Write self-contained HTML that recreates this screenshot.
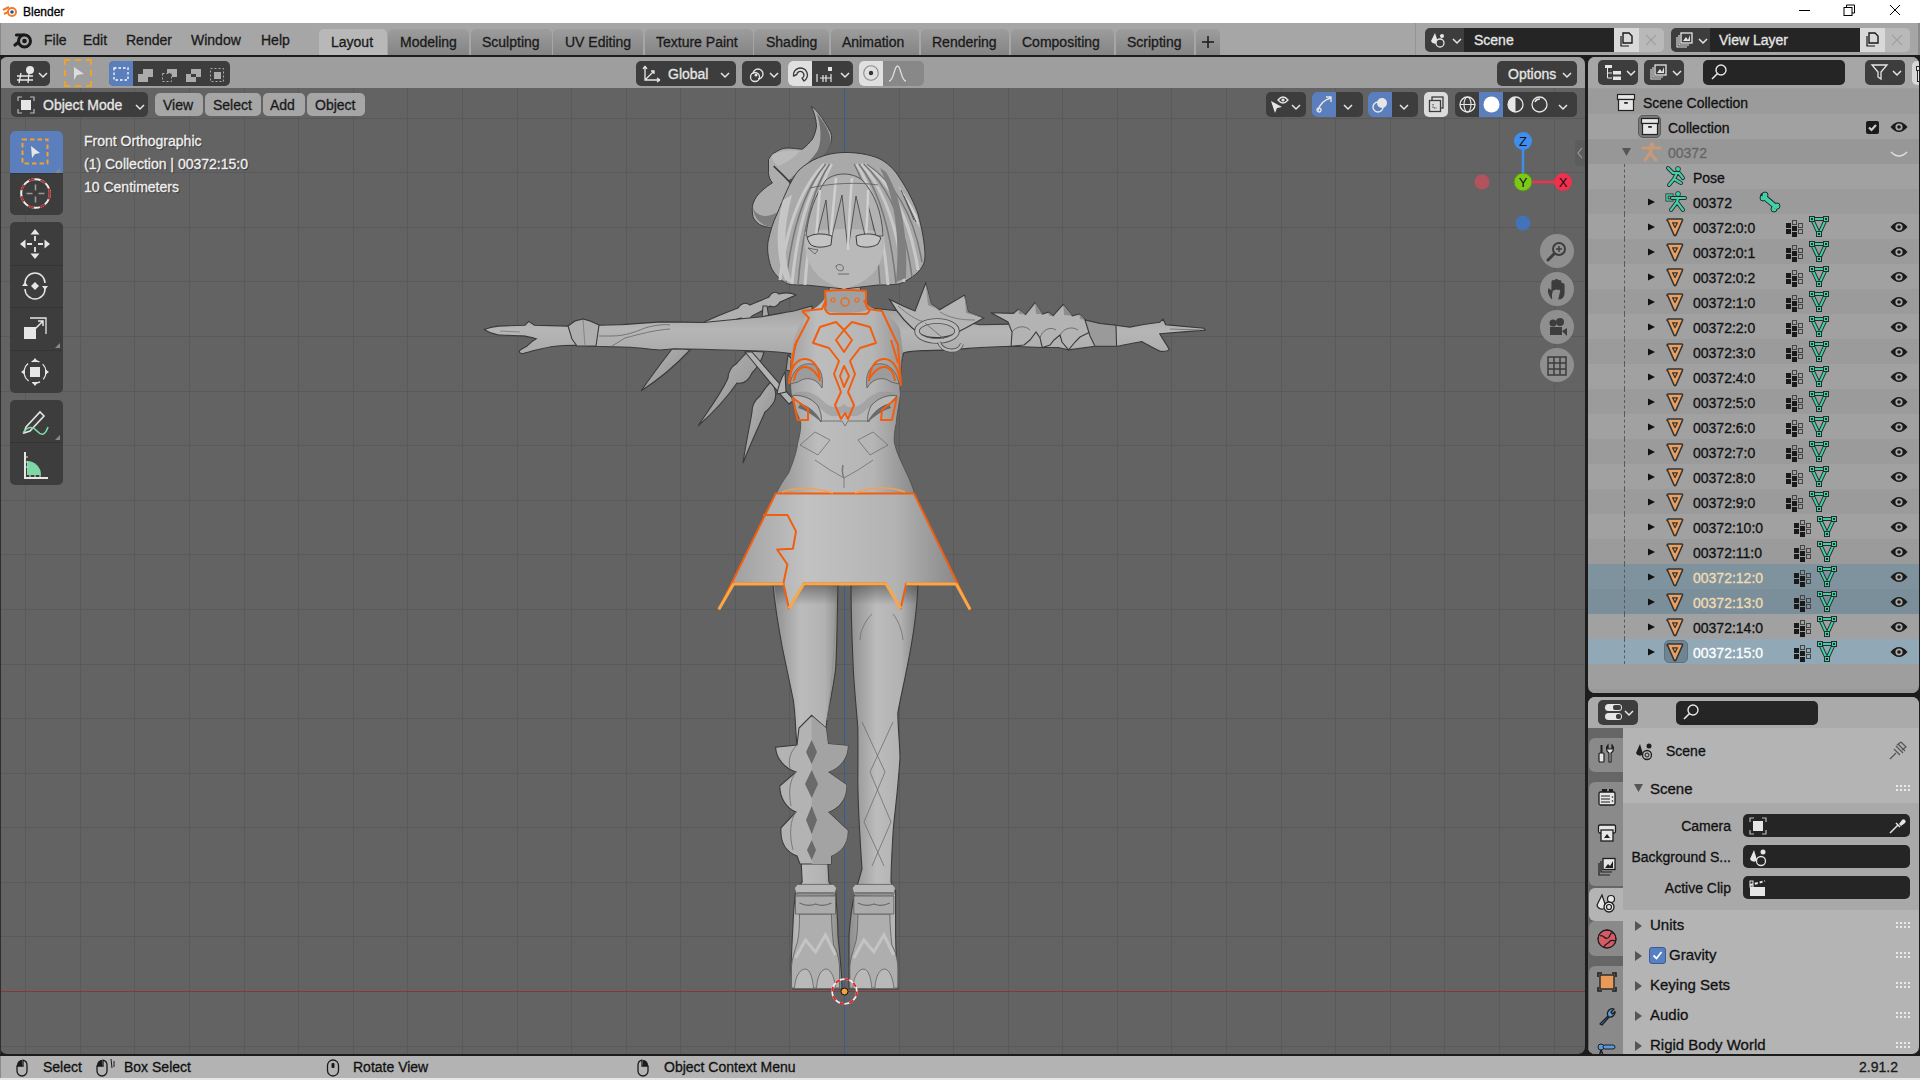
<!DOCTYPE html><html><head><meta charset="utf-8"><style>
*{margin:0;padding:0;box-sizing:border-box}
html,body{width:1920px;height:1080px;overflow:hidden;background:#1c1c1c;font-family:"Liberation Sans", sans-serif;-webkit-font-smoothing:antialiased;}
.a{position:absolute}
.t{position:absolute;white-space:nowrap;font-size:14px;line-height:16px;-webkit-text-stroke:0.3px currentColor}
svg{position:absolute;overflow:visible}
</style></head><body>
<div class="a" style="left:0px;top:0px;width:1920px;height:23px;background:#ffffff"></div><svg style="left:3px;top:4px" width="16" height="14" viewBox="0 0 16 14"><circle cx="9" cy="8" r="5" fill="#f5792a"/><circle cx="9" cy="8" r="3" fill="#fff"/><circle cx="9" cy="8" r="1.8" fill="#265787"/><path d="M0 6 L6 3 M1 10 L5 8" stroke="#f5792a" stroke-width="2"/></svg><div class="t" style="left:23px;top:4px;font-size:12px;color:#000">Blender</div><div class="a" style="left:1799px;top:10px;width:11px;height:1px;background:#000"></div><svg style="left:1843px;top:4px" width="13" height="13" viewBox="0 0 13 13"><rect x="1" y="3.5" width="8" height="8" fill="none" stroke="#000"/><path d="M3.5 3.5 V1 H11.5 V9 H9" fill="none" stroke="#000"/></svg><svg style="left:1889px;top:4px" width="13" height="13" viewBox="0 0 13 13"><path d="M1 1 L11 11 M11 1 L1 11" stroke="#000" stroke-width="1"/></svg><div class="a" style="left:0px;top:23px;width:1920px;height:32px;background:#a6a6a6"></div><div class="a" style="left:0px;top:23px;width:1px;height:32px;background:#8a8a8a"></div><div class="a" style="left:1918px;top:23px;width:2px;height:32px;background:#8a8a8a"></div><svg style="left:12px;top:30px" width="22" height="19" viewBox="0 0 22 19"><path d="M3 15 L10 9.5 M4.5 5 L12 5" stroke="#1a1a1a" stroke-width="3.2" stroke-linecap="round"/><circle cx="12.5" cy="11" r="6" fill="#a6a6a6" stroke="#1a1a1a" stroke-width="3"/><circle cx="12.5" cy="11" r="2.3" fill="#1a1a1a"/></svg><div class="t" style="left:44px;top:32px;color:#1a1a1a;font-size:14px">File</div><div class="t" style="left:83px;top:32px;color:#1a1a1a;font-size:14px">Edit</div><div class="t" style="left:126px;top:32px;color:#1a1a1a;font-size:14px">Render</div><div class="t" style="left:191px;top:32px;color:#1a1a1a;font-size:14px">Window</div><div class="t" style="left:261px;top:32px;color:#1a1a1a;font-size:14px">Help</div><div class="a" style="left:319px;top:29px;width:68px;height:26px;background:#b8b8b8;border-radius:5px 5px 0 0"></div><div class="t" style="left:331px;top:34px;color:#1a1a1a;font-size:14px">Layout</div><div class="a" style="left:388px;top:29px;width:81px;height:26px;background:linear-gradient(#9d9d9d,#848484);border-radius:5px 5px 0 0"></div><div class="t" style="left:400px;top:34px;color:#1a1a1a;font-size:14px">Modeling</div><div class="a" style="left:471px;top:29px;width:81px;height:26px;background:linear-gradient(#9d9d9d,#848484);border-radius:5px 5px 0 0"></div><div class="t" style="left:482px;top:34px;color:#1a1a1a;font-size:14px">Sculpting</div><div class="a" style="left:553px;top:29px;width:90px;height:26px;background:linear-gradient(#9d9d9d,#848484);border-radius:5px 5px 0 0"></div><div class="t" style="left:565px;top:34px;color:#1a1a1a;font-size:14px">UV Editing</div><div class="a" style="left:645px;top:29px;width:108px;height:26px;background:linear-gradient(#9d9d9d,#848484);border-radius:5px 5px 0 0"></div><div class="t" style="left:656px;top:34px;color:#1a1a1a;font-size:14px">Texture Paint</div><div class="a" style="left:754px;top:29px;width:75px;height:26px;background:linear-gradient(#9d9d9d,#848484);border-radius:5px 5px 0 0"></div><div class="t" style="left:766px;top:34px;color:#1a1a1a;font-size:14px">Shading</div><div class="a" style="left:831px;top:29px;width:88px;height:26px;background:linear-gradient(#9d9d9d,#848484);border-radius:5px 5px 0 0"></div><div class="t" style="left:842px;top:34px;color:#1a1a1a;font-size:14px">Animation</div><div class="a" style="left:921px;top:29px;width:88px;height:26px;background:linear-gradient(#9d9d9d,#848484);border-radius:5px 5px 0 0"></div><div class="t" style="left:932px;top:34px;color:#1a1a1a;font-size:14px">Rendering</div><div class="a" style="left:1011px;top:29px;width:103px;height:26px;background:linear-gradient(#9d9d9d,#848484);border-radius:5px 5px 0 0"></div><div class="t" style="left:1022px;top:34px;color:#1a1a1a;font-size:14px">Compositing</div><div class="a" style="left:1116px;top:29px;width:78px;height:26px;background:linear-gradient(#9d9d9d,#848484);border-radius:5px 5px 0 0"></div><div class="t" style="left:1127px;top:34px;color:#1a1a1a;font-size:14px">Scripting</div><div class="a" style="left:1196px;top:29px;width:24px;height:26px;background:linear-gradient(#9d9d9d,#848484);border-radius:5px 5px 0 0"></div><svg style="left:1202px;top:36px" width="12" height="12" viewBox="0 0 12 12"><path d="M6 0 V12 M0 6 H12" stroke="#1a1a1a" stroke-width="1.5"/></svg><div class="a" style="left:1415px;top:23px;width:1px;height:32px;background:#959595"></div><div class="a" style="left:1425px;top:28px;width:39px;height:24px;background:#3d3d3d;border-radius:5px 0 0 5px"></div><svg style="left:1430px;top:31px" width="18" height="18" viewBox="0 0 18 18"><path d="M5 2 L1 10 A4 4 0 0 0 8 11 Z" fill="#e6e6e6"/><circle cx="12" cy="5" r="2" fill="#e6e6e6"/><circle cx="10" cy="12" r="4" fill="#3d3d3d" stroke="#e6e6e6" stroke-width="1.3"/></svg><svg style="left:1452px;top:38px" width="10" height="6" viewBox="0 0 10 6"><path d="M1 1 L5 5 L9 1" stroke="#e6e6e6" stroke-width="1.5" fill="none"/></svg><div class="a" style="left:1464px;top:28px;width:150px;height:24px;background:#252525"></div><div class="t" style="left:1474px;top:32px;color:#e6e6e6;font-size:14px">Scene</div><div class="a" style="left:1614px;top:28px;width:25px;height:24px;background:#d9d9d9"></div><svg style="left:1618px;top:32px" width="16" height="16" viewBox="0 0 16 16"><path d="M5 1 H11 L14 4 V11 H5 Z" fill="none" stroke="#1a1a1a" stroke-width="1.4"/><path d="M3 4 V14 H11" fill="none" stroke="#1a1a1a" stroke-width="1.2"/></svg><div class="a" style="left:1639px;top:28px;width:25px;height:24px;background:#b9b9b9;border-radius:0 5px 5px 0"></div><svg style="left:1645px;top:34px" width="12" height="12" viewBox="0 0 12 12"><path d="M1 1 L11 11 M11 1 L1 11" stroke="#a0a0a0" stroke-width="1.2"/></svg><div class="a" style="left:1671px;top:28px;width:39px;height:24px;background:#3d3d3d;border-radius:5px 0 0 5px"></div><svg style="left:1676px;top:31px" width="18" height="18" viewBox="0 0 18 18"><rect x="5" y="2" width="11" height="10" fill="none" stroke="#e6e6e6" stroke-width="1.3"/><path d="M3 4 V14 H13 M1 6 V16 H11" fill="none" stroke="#e6e6e6" stroke-width="1.1"/><path d="M7 10 L10 6 L12 9 L14 4 V10 Z" fill="#e6e6e6"/></svg><svg style="left:1698px;top:38px" width="10" height="6" viewBox="0 0 10 6"><path d="M1 1 L5 5 L9 1" stroke="#e6e6e6" stroke-width="1.5" fill="none"/></svg><div class="a" style="left:1710px;top:28px;width:150px;height:24px;background:#252525"></div><div class="t" style="left:1719px;top:32px;color:#e6e6e6;font-size:14px">View Layer</div><div class="a" style="left:1860px;top:28px;width:25px;height:24px;background:#d9d9d9"></div><svg style="left:1864px;top:32px" width="16" height="16" viewBox="0 0 16 16"><path d="M5 1 H11 L14 4 V11 H5 Z" fill="none" stroke="#1a1a1a" stroke-width="1.4"/><path d="M3 4 V14 H11" fill="none" stroke="#1a1a1a" stroke-width="1.2"/></svg><div class="a" style="left:1885px;top:28px;width:25px;height:24px;background:#b9b9b9;border-radius:0 5px 5px 0"></div><svg style="left:1891px;top:34px" width="12" height="12" viewBox="0 0 12 12"><path d="M1 1 L11 11 M11 1 L1 11" stroke="#a0a0a0" stroke-width="1.2"/></svg><div class="a" style="left:0;top:57px;width:1585px;height:997px;background:#636363;border-radius:7px;overflow:hidden"><svg style="left:0px;top:0px" width="1585" height="997" viewBox="0 0 1585 997"><rect x="25" y="0" width="1" height="1000" fill="#5a5a5a"/><rect x="80" y="0" width="1" height="1000" fill="#5a5a5a"/><rect x="134" y="0" width="1" height="1000" fill="#5a5a5a"/><rect x="189" y="0" width="1" height="1000" fill="#5a5a5a"/><rect x="244" y="0" width="1" height="1000" fill="#5a5a5a"/><rect x="298" y="0" width="1" height="1000" fill="#5a5a5a"/><rect x="353" y="0" width="1" height="1000" fill="#5a5a5a"/><rect x="407" y="0" width="1" height="1000" fill="#5a5a5a"/><rect x="462" y="0" width="1" height="1000" fill="#5a5a5a"/><rect x="517" y="0" width="1" height="1000" fill="#5a5a5a"/><rect x="571" y="0" width="1" height="1000" fill="#5a5a5a"/><rect x="626" y="0" width="1" height="1000" fill="#5a5a5a"/><rect x="680" y="0" width="1" height="1000" fill="#5a5a5a"/><rect x="735" y="0" width="1" height="1000" fill="#5a5a5a"/><rect x="789" y="0" width="1" height="1000" fill="#5a5a5a"/><rect x="899" y="0" width="1" height="1000" fill="#5a5a5a"/><rect x="953" y="0" width="1" height="1000" fill="#5a5a5a"/><rect x="1008" y="0" width="1" height="1000" fill="#5a5a5a"/><rect x="1062" y="0" width="1" height="1000" fill="#5a5a5a"/><rect x="1117" y="0" width="1" height="1000" fill="#5a5a5a"/><rect x="1171" y="0" width="1" height="1000" fill="#5a5a5a"/><rect x="1226" y="0" width="1" height="1000" fill="#5a5a5a"/><rect x="1281" y="0" width="1" height="1000" fill="#5a5a5a"/><rect x="1335" y="0" width="1" height="1000" fill="#5a5a5a"/><rect x="1390" y="0" width="1" height="1000" fill="#5a5a5a"/><rect x="1444" y="0" width="1" height="1000" fill="#5a5a5a"/><rect x="1499" y="0" width="1" height="1000" fill="#5a5a5a"/><rect x="1554" y="0" width="1" height="1000" fill="#5a5a5a"/><rect x="0" y="6" width="1600" height="1" fill="#5a5a5a"/><rect x="0" y="61" width="1600" height="1" fill="#5a5a5a"/><rect x="0" y="115" width="1600" height="1" fill="#5a5a5a"/><rect x="0" y="170" width="1600" height="1" fill="#5a5a5a"/><rect x="0" y="224" width="1600" height="1" fill="#5a5a5a"/><rect x="0" y="279" width="1600" height="1" fill="#5a5a5a"/><rect x="0" y="334" width="1600" height="1" fill="#5a5a5a"/><rect x="0" y="388" width="1600" height="1" fill="#5a5a5a"/><rect x="0" y="443" width="1600" height="1" fill="#5a5a5a"/><rect x="0" y="497" width="1600" height="1" fill="#5a5a5a"/><rect x="0" y="552" width="1600" height="1" fill="#5a5a5a"/><rect x="0" y="607" width="1600" height="1" fill="#5a5a5a"/><rect x="0" y="661" width="1600" height="1" fill="#5a5a5a"/><rect x="0" y="716" width="1600" height="1" fill="#5a5a5a"/><rect x="0" y="770" width="1600" height="1" fill="#5a5a5a"/><rect x="0" y="825" width="1600" height="1" fill="#5a5a5a"/><rect x="0" y="879" width="1600" height="1" fill="#5a5a5a"/><rect x="0" y="989" width="1600" height="1" fill="#5a5a5a"/></svg><div class="a" style="left:0px;top:934px;width:1585px;height:1px;background:#8a3636"></div><div class="a" style="left:844px;top:0px;width:1px;height:997px;background:#3a5b96"></div><svg style="left:0;top:0" width="1585" height="997" viewBox="0 57 1585 997"><defs>
<linearGradient id="armG" x1="0" y1="0" x2="0" y2="1">
 <stop offset="0" stop-color="#a0a0a0"/><stop offset="0.35" stop-color="#b6b6b6"/><stop offset="0.7" stop-color="#ababab"/><stop offset="1" stop-color="#7e7e7e"/></linearGradient>
<linearGradient id="legG" x1="0" y1="0" x2="1" y2="0">
 <stop offset="0" stop-color="#8e8e8e"/><stop offset="0.4" stop-color="#bcbcbc"/><stop offset="0.75" stop-color="#b2b2b2"/><stop offset="1" stop-color="#858585"/></linearGradient>
<linearGradient id="torsoG" x1="0" y1="0" x2="1" y2="0">
 <stop offset="0" stop-color="#949494"/><stop offset="0.3" stop-color="#bdbdbd"/><stop offset="0.7" stop-color="#b5b5b5"/><stop offset="1" stop-color="#8a8a8a"/></linearGradient>
<linearGradient id="skirtG" x1="0" y1="0" x2="1" y2="0">
 <stop offset="0" stop-color="#9a9a9a"/><stop offset="0.35" stop-color="#c2c2c2"/><stop offset="0.7" stop-color="#b3b3b3"/><stop offset="1" stop-color="#808080"/></linearGradient>
<linearGradient id="hairG" x1="0" y1="0" x2="1" y2="0">
 <stop offset="0" stop-color="#9c9c9c"/><stop offset="0.4" stop-color="#bababa"/><stop offset="0.8" stop-color="#a8a8a8"/><stop offset="1" stop-color="#888888"/></linearGradient>
<linearGradient id="spikeG" x1="0" y1="0" x2="1" y2="1">
 <stop offset="0" stop-color="#b8b8b8"/><stop offset="1" stop-color="#8a8a8a"/></linearGradient>
</defs><path d="M700,324 C712,318 725,313 738,308 C741,303 746,302 750,305 C757,302 764,299 769,297 C771,292 776,291 779,294 C786,292 792,293 796,295 C790,298 784,300 780,302 C778,306 774,308 770,306 C764,310 758,313 752,316 C749,320 744,321 741,318 C728,322 716,325 705,327 Z" fill="#b0b0b0" stroke="#3a3a3a" stroke-width="1.1"/><path d="M763,306 L767,306 L769,318 L762,318 Z" fill="#a8a8a8" stroke="#3a3a3a" stroke-width="1.1"/><path d="M672,349 C680,348.5 686,349 690,350 C675,366 658,380 641,391 C650,378 662,362 672,349 Z" fill="url(#spikeG)" stroke="#3a3a3a" stroke-width="1.1"/><path d="M748,351 L764,352 C762,360 757,368 752,373 C748,382 742,384 737,383 C728,396 714,412 698,426 C710,408 722,392 728,378 C728,372 732,366 736,364 C740,360 744,355 748,351 Z" fill="url(#spikeG)" stroke="#3a3a3a" stroke-width="1.1"/><path d="M771,382 C776,388 777,396 774,402 C770,408 768,410 765,412 C758,428 750,445 743,463 C746,442 750,425 752,412 C752,405 755,400 760,396 C764,390 767,385 771,382 Z" fill="url(#spikeG)" stroke="#3a3a3a" stroke-width="1.1"/><path d="M745,352 L752,352 C766,368 780,385 794,400 L789,404 C776,390 760,370 745,352 Z" fill="#b3b3b3" stroke="#3a3a3a" stroke-width="1.1"/><path d="M785,372 C780,380 778,388 777,394 L786,392 Z" fill="#b3b3b3" stroke="#3a3a3a" stroke-width="1.1"/><path d="M788,355 C794,360 796,366 794,372 L786,370 Z" fill="#a0a0a0" stroke="#3a3a3a" stroke-width="1.1"/><path d="M870,308 C880,309 890,310 900,311 C930,316 960,321 980,324.7 L1010,324.1 L1099.8,323.5 L1115.4,325.3 L1129.7,327.1 C1140,325 1150,323.5 1159.7,322.3 L1163,319 L1165.7,324.7 C1180,326 1195,327.5 1204,328.3 L1205.2,330.1 C1190,331.5 1170,333 1159.7,333.7 C1163,340 1168,346 1169.3,349.9 C1166,352 1162,351.5 1159.7,351.1 C1152,347 1146,344 1141.7,341.5 C1133,343 1125,345 1116.6,346.3 L1095,346.3 L1068.6,349.9 L1057.9,347.5 L1042.3,347.5 L1011.1,346.3 L980,347.5 C960,349 940,351 923,350.6 C912,351 905,352 903.6,353 L898,376 L870,376 Z" fill="url(#armG)" stroke="#3a3a3a" stroke-width="1.1"/><path d="M990.8,312.8 L1013.5,313.4 L1018.3,309.2 L1025.5,314.6 L1035.1,302.6 L1042.3,314 L1048.3,312.2 L1053,315.8 L1063.3,304.4 L1072.2,315.8 L1079.4,314 L1085.4,320 L1099.8,323.5 L1097,330 L1088,333 L1080,337 L1075,342 L1068.6,349.9 L1062,342 L1060,335 L1054,340 L1050,345 L1042.3,347.5 L1040,338 L1036,332 L1030,340 L1024,345 L1011.1,346.3 L1012,332 L1008,322 Z" fill="#b3b3b3" stroke="#3a3a3a" stroke-width="1.1"/><path d="M1035.1,302.6 L1042.3,314 L1036,314 Z M1063.3,304.4 L1072.2,315.8 L1064,315 Z M1018.3,309.2 L1025.5,314.6 L1019,314 Z M1048.3,312.2 L1053,315.8 L1049,315.5 Z M1079.4,314 L1085.4,320 L1080,319 Z" fill="#8c8c8c"/><path d="M1012,332 C1016,326 1025,325 1030,330 M1040,338 C1042,330 1050,326 1056,330 M1060,335 C1064,328 1072,326 1078,330" stroke="#5e5e5e" stroke-width="0.8" fill="none"/><path d="M1085,320 L1099.8,323.5 L1116,325.3 L1116.6,346.3 L1095,346.3 L1090,336 Z" fill="#9a9a9a" stroke="#3a3a3a" stroke-width="1.1"/><path d="M1170,329 L1200,330" stroke="#777" stroke-width="1" fill="none"/><path d="M889.6,299.6 C897,303 906,308 915,311 L925.7,283 L931,304 L939.6,309.8 L964.6,295 L968,312 L984,318 C976,322 968,327 958,332 C948,338 932,340 920,334 C908,326 898,314 889.6,299.6 Z" fill="#b4b4b4" stroke="#3a3a3a" stroke-width="1.1"/><path d="M925.7,283 L928,305 L939.6,309.8 L931,304 Z M964.6,295 L966,313 L984,318 L968,312 Z" fill="#8e8e8e"/><path d="M898,306 C908,314 915,320 925,322 M940,312 C950,318 960,320 975,320" stroke="#6e6e6e" stroke-width="0.8" fill="none"/><ellipse cx="937" cy="331" rx="20" ry="10" fill="none" stroke="#4e4e4e" stroke-width="5.5"/><ellipse cx="937" cy="331" rx="20" ry="10" fill="none" stroke="#b9b9b9" stroke-width="3.8"/><path d="M925,323 L944,339" stroke="#666" stroke-width="0.8"/><path d="M939,342 C942,352 958,354 962,344" fill="none" stroke="#4e4e4e" stroke-width="4"/><path d="M939,342 C942,352 958,354 962,344" fill="none" stroke="#b5b5b5" stroke-width="2.4"/><path d="M898,352 C902,358 903,366 901,376 L896,376 Z" fill="#555"/><path d="M484.2,329.4 C490,327 495,326.5 498.7,326.1 C510,325.5 520,325.3 525,325.2 L528.7,321.4 L534.4,325.2 C540,325.4 545,325.5 550.3,325.6 L568.1,326.1 L575,321 L583.1,319.1 L590,321 L599,325.2 C610,325 615,324.8 620.6,324.7 C640,323.5 650,322.5 660,321.9 C680,322 695,322.3 703.6,322.5 C730,320 750,318 761.9,316.7 C775,314.5 785,312.5 794.9,310.8 L812,306 L815,372 C805,362 797,355 791,353.6 C780,352 765,351 752.2,350.7 C720,350 700,349 674.4,348.7 L660,350 C650,349 640,348 630,347.2 C615,346.8 600,346.4 592.5,346.2 C585,345.8 580,345.5 573.7,345.3 C565,345.5 560,345.8 555,346.2 C548,347 542,348.5 536.2,350 C530,351.5 526,353 522.2,353.7 C520,353.5 519,352 519.4,350.9 C521,349 524,347.5 526.9,346.2 C530,343 533,340.5 536.2,338.8 C530,337 526,336.2 522.2,335.9 C515,335.5 505,335.2 498.7,335 C492,333.5 488,332 485.6,330.3 Z" fill="url(#armG)" stroke="#3a3a3a" stroke-width="1.1"/><path d="M568,326 L575,321 L583,319 L590,321 L599,325 L596,346 L577,346 L572,339 Z" fill="#aeaeae" stroke="#3a3a3a" stroke-width="1.1"/><path d="M583,320 L585,346 M500,331 L520,332" stroke="#7a7a7a" stroke-width="0.8" fill="none"/><path d="M599,336 L612,336 C625,336 635,332 645,328 C655,325 665,324 670,325 M612,346 L625,338 C640,334 655,330 670,329" fill="none" stroke="#6e6e6e" stroke-width="0.9"/><path d="M828,290 L861,290 C863,300 866,305 872,308 C885,312 895,318 900,330 L903,353 C900,370 899,385 900.5,394 C898,410 896,420 896.4,422.5 C894,432 894,440 894.4,443 C897,455 903,465 906.6,473.4 C910,480 913,488 914.8,494 L776,494 C780,485 785,478 788.5,473.4 C794,460 797,450 797.7,443 C800,435 801,428 800.7,422.5 C797,412 793,405 792.6,402 C790,390 790,375 791,360 C792,340 800,318 812,310 C820,305 826,300 828,290 Z" fill="url(#torsoG)"/><path d="M791,360 C790,375 790,390 792.6,402 C793,405 797,412 800.7,422.5 C801,428 800,435 797.7,443 C797,450 794,460 788.5,473.4 C785,478 780,485 776,494 M903,353 C900,370 899,385 900.5,394 C898,410 896,420 896.4,422.5 C894,432 894,440 894.4,443 C897,455 903,465 906.6,473.4 C910,480 913,488 914.8,494" fill="none" stroke="#4e4e4e" stroke-width="0.8"/><path d="M800,445 L815,432 L830,440 L818,455 Z M888,445 L873,432 L858,440 L870,455 Z M815,460 L830,470 L844,478 L858,470 L873,460 M844,478 L844,488" fill="none" stroke="#6e6e6e" stroke-width="0.8"/><path d="M843,465 C842,470 842,474 844,478" stroke="#7a7a7a" stroke-width="1.5" fill="none"/><path d="M773,585 L838,585 C837,620 837,650 835.6,669 C833,690 828,710 826.7,722 C825,735 824,745 824.4,758 C825,800 827,850 828.9,882 L835.6,891 C837,910 838,930 838,936 C840,955 842,975 842,989 L793,989 C791,975 791,970 791,967 C792,940 793,925 793.3,918 C794,905 795,897 795.6,891 L802.2,882 C800,840 798,790 797.8,758 C797,745 796,735 795.6,727 C795,715 794,705 793.3,700 C789,680 785,660 782.2,647 C778,625 775,605 773,585 Z" fill="url(#legG)" stroke="#3a3a3a" stroke-width="1.1"/><path d="M851,585 L918,585 C917,610 914,630 911,647 C906,675 900,700 897.8,713 C898,730 900,745 900,758 C898,790 895,810 893.3,829 C892,850 891,870 891,882 L895.6,891 C895.6,910 895.6,925 895.6,936 C896,955 897,975 897.8,989 L849,989 C849,975 849,955 849,936 C850,920 853,900 855.6,891 L862,869 C860,840 858,810 857.8,780 C858,760 858,740 857.8,727 C856,705 854,685 853.3,669 C852,640 851,610 851,585 Z" fill="url(#legG)" stroke="#3a3a3a" stroke-width="1.1"/><path d="M836,600 C835,640 833,680 827,720" stroke="#8a8a8a" stroke-width="1.2" fill="none" opacity="0.6"/><defs><linearGradient id="shadG" x1="0" y1="0" x2="0" y2="1"><stop offset="0" stop-color="#3a3a3a" stop-opacity="0.55"/><stop offset="1" stop-color="#3a3a3a" stop-opacity="0"/></linearGradient></defs><path d="M774,583 L838,583 L837,605 L777,605 Z M851,583 L918,583 L916,605 L851,605 Z" fill="url(#shadG)"/><path d="M811.7,715.3 L826,728 L828,744 L847.8,745.8 C848,758 840,768 828,772 L846.4,784.7 C847,798 840,808 828,812 L847.8,830.6 C848,845 840,852 831,856 L831,864 L800,864 L797,856 C786,852 780,842 781,827.8 L796,812 C786,808 780,798 779.7,786 L796,772 C784,768 776,758 775.6,747.2 L797,745 L799,728 Z" fill="#b3b3b3" stroke="#3a3a3a" stroke-width="1.1"/><path d="M811.7,716 L826,728 L828,744 L847.8,745.8 C848,758 840,768 828,772 L846.4,784.7 C847,798 840,808 828,812 L847.8,830.6 C848,845 840,852 831,856 L831,864 L811.7,864 Z" fill="#a3a3a3"/><path d="M811.7,740 L806,752 L811.7,764 L817,752 Z M811.7,770 L805,784 L811.7,798 L818,784 Z M811.7,806 L806,820 L811.7,834 L817,820 Z M811.7,840 L807,850 L811.7,860 L816,850 Z" fill="#6a6a6a"/><path d="M797,745 C790,752 788,760 790,768 M796,772 C790,780 788,790 791,806 M796,812 C790,820 789,835 793,850" stroke="#7a7a7a" stroke-width="1" fill="none"/><path d="M862,722 L885,772 L864,822 L884,866 M893,722 L870,772 L891,822 L872,866 M860,640 C860,630 866,620 872,614 M903,640 C902,630 898,620 893,614" fill="none" stroke="#6e6e6e" stroke-width="0.8"/><path d="M799.5,914 C799.5,930 798.5,940 796.5,945 C793.5,955 791.5,962 791.5,968 L791.5,988 L839.5,988 L839.5,968 C839.5,960 836.5,950 833.5,945 C832.5,935 831.5,925 831.5,914 Z" fill="#aeaeae" stroke="#5a5a5a" stroke-width="0.8"/><path d="M795.5,896 L835.5,896 L835.5,914 L795.5,914 Z" fill="#ababab" stroke="#5a5a5a" stroke-width="0.8"/><path d="M799.5,903 C805.5,906 810.5,906 815.5,904 C820.5,906 825.5,906 831.5,903" stroke="#6a6a6a" stroke-width="1.2" fill="none"/><path d="M794.4,888 L797.4,884.4 L833.6,884.4 L836.6,888 L834.6,895 L796.4,895 Z" fill="#b8b8b8" stroke="#5a5a5a" stroke-width="0.8"/><path d="M796.4,893 L834.6,893" stroke="#7a7a7a" stroke-width="2.2"/><path d="M795.5,958 L805.5,940 L815.5,952 L825.5,935 L835.5,955" fill="none" stroke="#c4c4c4" stroke-width="3"/><path d="M794.5,988 C795.5,975 800.5,969 805.5,969 C810.5,970 812.5,978 813.5,988 M816.5,988 C817.5,975 821.5,969 826.5,969 C831.5,970 834.5,978 835.5,988" fill="#b9b9b9" stroke="#6a6a6a" stroke-width="0.9"/><path d="M857.85,914 C857.85,930 856.85,940 854.85,945 C851.85,955 849.85,962 849.85,968 L849.85,988 L897.85,988 L897.85,968 C897.85,960 894.85,950 891.85,945 C890.85,935 889.85,925 889.85,914 Z" fill="#aeaeae" stroke="#5a5a5a" stroke-width="0.8"/><path d="M853.85,896 L893.85,896 L893.85,914 L853.85,914 Z" fill="#ababab" stroke="#5a5a5a" stroke-width="0.8"/><path d="M857.85,903 C863.85,906 868.85,906 873.85,904 C878.85,906 883.85,906 889.85,903" stroke="#6a6a6a" stroke-width="1.2" fill="none"/><path d="M852.2,888 L855.2,884.4 L892.5,884.4 L895.5,888 L893.5,895 L854.2,895 Z" fill="#b8b8b8" stroke="#5a5a5a" stroke-width="0.8"/><path d="M854.2,893 L893.5,893" stroke="#7a7a7a" stroke-width="2.2"/><path d="M853.85,958 L863.85,940 L873.85,952 L883.85,935 L893.85,955" fill="none" stroke="#c4c4c4" stroke-width="3"/><path d="M852.85,988 C853.85,975 858.85,969 863.85,969 C868.85,970 870.85,978 871.85,988 M874.85,988 C875.85,975 879.85,969 884.85,969 C889.85,970 892.85,978 893.85,988" fill="#b9b9b9" stroke="#6a6a6a" stroke-width="0.9"/><path d="M775.6,493.6 L914.1,493.6 L970,609.3 L955.8,583.4 L906.2,583.4 L900.7,608.5 L885.8,583.4 L803.9,583.4 L789,608.5 L783.4,583.4 L733.8,583.4 L718.9,609.3 Z" fill="url(#skirtG)"/><path d="M775.6,493.6 L914.1,493.6 L970,609.3 L955.8,583.4 L906.2,583.4 L900.7,608.5 L885.8,583.4 L803.9,583.4 L789,608.5 L783.4,583.4 L733.8,583.4 L718.9,609.3 Z" fill="none" stroke="#f15e10" stroke-width="2" stroke-linejoin="round"/><path d="M763,514.9 L787.4,514.9 L796,531.4 L792.9,548.7 L777.1,549.5 L787.4,564.5 L783.4,583.4" fill="none" stroke="#f15e10" stroke-width="2" stroke-linejoin="round"/><path d="M733.8,583.4 L718.9,609.3 M955.8,583.4 L970,609.3 M789,608.5 L803.9,583.4 M885.8,583.4 L900.7,608.5 M733.8,584 L783.4,584 M803.9,584 L885.8,584 M906.2,584 L955.8,584" stroke="#f8a848" stroke-width="3" fill="none"/><path d="M782,492 C795,487 810,486 833,493 M855,493 C870,487 890,486 905,492" stroke="#f5a050" stroke-width="1.5" fill="none"/><path d="M830,280 L860,280 L861,300 L828,300 Z" fill="#a8a8a8" stroke="#3a3a3a" stroke-width="1.1"/><path d="M811.3,106.5 C818,110 826,124 830.7,132.4 C832,137 832,140 830.7,142.8 C829,148 826,152 824.2,154.4 C820,160 816,164 812.6,167.4 C806,172 802,174 798.3,176.5 L789.2,180.3 C790,184 791.5,187 791.8,190.7 C792,195 792,198 791.8,201.1 C790,207 786,212 782.8,216.6 C779,221 776,224 772.4,227 C768,228 762,226 759.4,224.4 C756,222 754,219 753,216.6 C752,212 752,207 753,203.7 C755,198 758,194 762,190.7 C766,187 769,185 772.4,182.9 C770,180 768.5,176 768.5,172.6 L768.5,159.6 C770,156 773,153 776.3,151.8 C780,149 784,148 788,148 C793,148 798,149 802.2,149.2 C807,146 810,142 812.6,138.9 C815,134 816,130 816.5,125.9 C816,118 814,112 811.3,106.5 Z" fill="#adadad" stroke="#3a3a3a" stroke-width="1"/><path d="M816.5,113 C824,122 831,132 830.7,142.8 C829,150 824,156 816,164 C804,172 796,176 790,179 C800,170 812,160 818,150 C822,140 821,125 816.5,113 Z" fill="#6f6f6f"/><path d="M773.7,166.1 C780,172 786,178 790.5,182.9" stroke="#3a3a3a" stroke-width="1.6" fill="none"/><path d="M753,208 C754,220 764,228 774,226 C784,220 790,210 791.5,196 C786,208 776,216 764,216 C758,215 755,212 753,208 Z" fill="#7e7e7e"/><path d="M772,155 C780,150 792,150 800,151 C794,158 786,163 778,166 C774,163 771,159 772,155 Z" fill="#bbbbbb"/><path d="M843,152.5 C860,152 875,156 882,160 C890,165 896,172 899,177 C908,190 915,205 918,214 C922,228 925,245 925,256 C925,262 923,266 920,270 C915,276 905,282 899,284 C890,285 880,285 878,285 L844,289 L806,285 C800,285 792,285 788,284 C780,280 774,274 771,267 C768,258 767,250 768,242 C770,232 773,222 777,214 C783,200 790,180 799,170 C810,160 825,153 843,152.5 Z" fill="#a9a9a9" stroke="#3a3a3a" stroke-width="1"/><path d="M824.1,164 Q789.5,199.4 780,280 M827.7,164 Q799.6,200.8 792,284 M831.6,164 Q810.7,201.2 805,285 M856.5,164 Q881.2,201.2 888,285 M861.3,164 Q894.9,200.1 904,282 M865.5,164 Q906.8,195.9 918,270" fill="none" stroke="#c9c9c9" stroke-width="3"/><path d="M825.9,164 Q794.5,200.4 786,283 M829.5,164 Q804.8,201.2 798,285 M854.1,164 Q874.5,201.2 880,285 M858.9,164 Q888.0,200.8 896,284 M863.7,164 Q901.6,198.3 912,277 M866.7,164 Q910.1,193.1 922,262" fill="none" stroke="#777" stroke-width="1.5"/><path d="M886,172 C900,195 908,230 906,278 L896,282 C900,240 896,200 880,168 Z" fill="#7f7f7f"/><path d="M898,185 C905,195 912,205 917,216 L920,228 C912,215 905,200 898,185 Z" fill="#d0d0d0"/><path d="M783,200 C776,225 775,255 785,280 L792,283 C782,255 784,225 792,195 Z" fill="#c6c6c6"/><path d="M901,190 L914,220 M904,196 L916,222" stroke="#555" stroke-width="1" fill="none"/><path d="M805,232 C830,228 860,228 884,232 C886,262 876,280 844,289 C814,281 803,262 805,232 Z" fill="#b9b9b9"/><path d="M806,236 C808,215 815,195 826,180 C836,172 852,172 862,180 C874,192 882,212 883,236 L876,236 L868,205 L866,240 L856,196 L848,250 L842,195 L830,244 L826,200 L816,240 Z" fill="#b2b2b2" stroke="#4a4a4a" stroke-width="0.9" stroke-linejoin="round"/><path d="M820,190 C818,205 818,220 816,236 M836,178 C834,200 832,220 830,244 M852,178 C850,200 849,225 848,250 M868,190 C868,205 867,220 866,240" stroke="#d0d0d0" stroke-width="2.5" fill="none"/><path d="M810,188 C830,183 860,182 878,185" stroke="#5a5a5a" stroke-width="0.8" fill="none"/><path d="M807,238 C812,233 824,233 832,236 L831,245 C824,248 814,248 810,244 Z M856,236 C864,233 876,233 881,238 L878,244 C872,248 862,248 857,245 Z" fill="#c4c4c4" stroke="#3e3e3e" stroke-width="1"/><path d="M808,248 L815,254 L818,250 Z" fill="none" stroke="#555" stroke-width="0.8"/><path d="M836,266 C839,263 845,265 843,270 C840,272 836,270 836,266 Z M838,274 L849,274" fill="none" stroke="#555" stroke-width="0.8"/><path d="M825,291 L866,291 L867,310 C860,314 830,314 824,310 Z" fill="#a0a0a0"/><path d="M825,291 C835,290 855,290 866,291 L866,305 C870,308 871,312 866,314 L830,314 C825,312 824,308 826,305 Z" fill="none" stroke="#f15e10" stroke-width="2" stroke-linejoin="round"/><circle cx="845" cy="302" r="4" fill="none" stroke="#f06a1e" stroke-width="1.5"/><circle cx="833" cy="300" r="2" fill="none" stroke="#f06a1e" stroke-width="1.2"/><circle cx="857" cy="300" r="2" fill="none" stroke="#f06a1e" stroke-width="1.2"/><path d="M792,395 C800,388 815,392 822,400 C830,408 838,410 844,404 C850,410 858,408 866,400 C873,392 888,388 897,395 L897,402 C888,398 875,402 866,410 C858,418 850,418 844,412 C838,418 830,418 822,410 C815,402 800,398 792,402 Z" fill="#8e8e8e" opacity="0.45"/><path d="M790,384 C792,372 800,362 812,364 C820,366 824,376 822,388 C816,378 806,376 798,382 Z M899,384 C897,372 889,362 877,364 C869,366 865,376 867,388 C873,378 883,376 891,382 Z" fill="#9c9c9c" stroke="#5a5a5a" stroke-width="0.8"/><path d="M792,396 C800,394 812,398 818,406 C821,412 822,418 821,422 C816,412 808,406 800,404 Z M897,396 C889,394 877,398 871,406 C868,412 867,418 868,422 C873,412 881,406 889,404 Z" fill="#b8b8b8" stroke="#4e4e4e" stroke-width="0.8"/><path d="M800,404 C808,406 816,412 821,422 C814,416 806,410 798,408 Z M889,404 C881,406 873,412 868,422 C875,416 883,410 891,408 Z" fill="#6a6a6a"/><path d="M820,421 L842,421 L845,426 L848,421 L870,421" stroke="#666" stroke-width="0.8" fill="none"/><path d="M802,311 L822,309 L826,300 M864,300 L868,309 L882,311 L898,345 L901,386 M802,311 L809,318 L795,345 L789,384" fill="none" stroke="#f15e10" stroke-width="2" stroke-linejoin="round"/><path d="M797,340 L791,363 M891,340 L898,363" fill="none" stroke="#f15e10" stroke-width="2" stroke-linejoin="round"/><path d="M820,327 L836,322 L844,330 L852,322 L870,327 L876,343 L860,348 L850,361 L855,374 L848,392 L854,405 L848,419 L845,413 L841,419 L835,405 L841,392 L834,374 L839,361 L829,348 L813,343 Z" fill="none" stroke="#f15e10" stroke-width="2" stroke-linejoin="round"/><path d="M844,330 L852,340 L844,352 L836,340 Z M844,366 L849,376 L844,387 L840,376 Z" fill="none" stroke="#f15e10" stroke-width="2" stroke-linejoin="round"/><path d="M789,382 C790,368 797,358 806,359 C814,360 819,368 820,381 M794,381 C795,372 800,366 806,367 C812,368 815,372 820,379 M900,382 C899,368 892,358 883,359 C875,360 870,368 869,381 M895,381 C894,372 889,366 883,367 C877,368 874,372 869,379" fill="none" stroke="#f15e10" stroke-width="2" stroke-linejoin="round"/><path d="M793,398 L808,409 L808,420 L797.6,420 Z M896.7,398 L882,410 L881,420 L892,420 Z" fill="none" stroke="#f15e10" stroke-width="2" stroke-linejoin="round"/></svg><svg style="left:831px;top:921px" width="27" height="27" viewBox="0 0 27 27"><circle cx="13.5" cy="13.5" r="12.3" fill="none" stroke="#f0f0f0" stroke-width="1.7"/><circle cx="13.5" cy="13.5" r="12.3" fill="none" stroke="#e82020" stroke-width="1.7" stroke-dasharray="4.8 4.8"/><circle cx="13.5" cy="13.5" r="3.5" fill="#f5a238" stroke="#111" stroke-width="1"/></svg><div class="a" style="left:0px;top:0px;width:1585px;height:31px;background:#9e9e9e"></div><div class="a" style="left:10px;top:4px;width:40px;height:25px;background:#3d3d3d;border-radius:5px"></div><svg style="left:16px;top:8px" width="22" height="18" viewBox="0 0 22 18"><circle cx="14" cy="5" r="4" fill="#e6e6e6"/><path d="M1 11 H17 M1 15 H17 M5 8 L3 18 M13 8 L12 18" stroke="#e6e6e6" stroke-width="1.3"/></svg><svg style="left:38px;top:15px" width="10" height="6" viewBox="0 0 10 6"><path d="M1 1 L5 5 L9 1" stroke="#e6e6e6" stroke-width="1.5" fill="none"/></svg><div class="a" style="left:64px;top:2px;width:28px;height:28px;border:2.5px dashed #f0a22e;border-radius:2px"></div><svg style="left:73px;top:9px" width="12" height="14" viewBox="0 0 12 14"><path d="M1 1 L11 8 L4 9 L1 14 Z" fill="#dcdcdc"/></svg><div class="a" style="left:109px;top:4px;width:121px;height:25px;background:#3d3d3d;border-radius:5px"></div><div class="a" style="left:109px;top:4px;width:24px;height:25px;background:#5b7fbd;border-radius:5px 0 0 5px"></div><svg style="left:113px;top:10px" width="16" height="14" viewBox="0 0 16 14"><rect x="1" y="1" width="14" height="12" fill="none" stroke="#fff" stroke-width="1.3" stroke-dasharray="2.5 2"/></svg><svg style="left:137px;top:10px" width="17" height="17" viewBox="0 0 17 17"><path d="M1 15 V7 H6 V2 H16 V10 H11 V15 Z" fill="#ababab"/></svg><svg style="left:161px;top:10px" width="17" height="17" viewBox="0 0 17 17"><rect x="1.5" y="6.5" width="9" height="8" fill="none" stroke="#ababab" stroke-dasharray="2 2"/><path d="M6 2 H16 V10 H11 V6 H6 Z" fill="#ababab"/></svg><svg style="left:185px;top:10px" width="17" height="17" viewBox="0 0 17 17"><path d="M1 15 V7 H6 V2 H16 V10 H11 V15 Z M6 7 V10 H11 V7 Z" fill="#ababab" fill-rule="evenodd"/></svg><svg style="left:209px;top:10px" width="17" height="17" viewBox="0 0 17 17"><rect x="1.5" y="1.5" width="13" height="13" fill="none" stroke="#ababab" stroke-dasharray="2 2"/><rect x="5" y="5" width="7" height="7" fill="#ababab"/></svg><div class="a" style="left:636px;top:4px;width:100px;height:25px;background:#3d3d3d;border-radius:5px"></div><svg style="left:642px;top:7px" width="20" height="20" viewBox="0 0 20 20"><path d="M3 2 V16 H18 M3 16 L12 7 M9 7 H12 V10 M3 2 L1 5 M3 2 L5 5 M18 16 L15 14 M18 16 L15 18" stroke="#e6e6e6" stroke-width="1.3" fill="none"/></svg><div class="t" style="left:668px;top:9px;color:#e6e6e6">Global</div><svg style="left:720px;top:15px" width="10" height="6" viewBox="0 0 10 6"><path d="M1 1 L5 5 L9 1" stroke="#e6e6e6" stroke-width="1.5" fill="none"/></svg><div class="a" style="left:742px;top:4px;width:39px;height:25px;background:#3d3d3d;border-radius:5px"></div><svg style="left:748px;top:8px" width="20" height="18" viewBox="0 0 20 18"><circle cx="7" cy="12" r="4.5" fill="none" stroke="#e6e6e6" stroke-width="1.3"/><path d="M5 9 A5 5 0 1 1 10 14" fill="none" stroke="#e6e6e6" stroke-width="1.3"/><circle cx="8" cy="10" r="1.5" fill="#e6e6e6"/></svg><svg style="left:769px;top:15px" width="10" height="6" viewBox="0 0 10 6"><path d="M1 1 L5 5 L9 1" stroke="#e6e6e6" stroke-width="1.5" fill="none"/></svg><div class="a" style="left:788px;top:4px;width:65px;height:25px;background:#3d3d3d;border-radius:5px"></div><div class="a" style="left:788px;top:4px;width:24px;height:25px;background:#e0e0e0;border-radius:5px 0 0 5px"></div><svg style="left:790px;top:7px" width="20" height="20" viewBox="0 0 20 20"><path d="M3.5 12 A7 7 0 1 1 14 17 L12 14.2 A3.6 3.6 0 1 0 6.8 10.5 Z" fill="none" stroke="#3d3d3d" stroke-width="1.4" stroke-linejoin="round"/></svg><svg style="left:815px;top:9px" width="20" height="17" viewBox="0 0 20 17"><path d="M2 8 V16 M5 12 H11 M8 9 V16 M11 9 V16 M16 8 V16 M11 12 H16" stroke="#e6e6e6" stroke-width="1.2" fill="none"/><rect x="13" y="1" width="4" height="4" fill="#e6e6e6"/></svg><svg style="left:840px;top:15px" width="10" height="6" viewBox="0 0 10 6"><path d="M1 1 L5 5 L9 1" stroke="#e6e6e6" stroke-width="1.5" fill="none"/></svg><div class="a" style="left:859px;top:4px;width:65px;height:25px;background:#888888;border-radius:5px"></div><div class="a" style="left:859px;top:4px;width:24px;height:25px;background:#e0e0e0;border-radius:5px 0 0 5px"></div><svg style="left:862px;top:7px" width="18" height="18" viewBox="0 0 18 18"><circle cx="9" cy="9" r="7.3" fill="none" stroke="#8a8a8a" stroke-width="1.1"/><circle cx="9" cy="9" r="2.2" fill="#333"/></svg><svg style="left:888px;top:8px" width="20" height="17" viewBox="0 0 20 17"><path d="M1 16 C6 16 6 1 9.5 1 C13 1 13 16 18 16" fill="none" stroke="#dcdcdc" stroke-width="1.3"/></svg><div class="a" style="left:1497px;top:4px;width:80px;height:25px;background:#3d3d3d;border-radius:5px"></div><div class="t" style="left:1508px;top:9px;color:#e6e6e6">Options</div><svg style="left:1562px;top:15px" width="10" height="6" viewBox="0 0 10 6"><path d="M1 1 L5 5 L9 1" stroke="#e6e6e6" stroke-width="1.5" fill="none"/></svg><div class="a" style="left:11px;top:35px;width:137px;height:25px;background:#3d3d3d;border-radius:5px"></div><svg style="left:17px;top:39px" width="18" height="18" viewBox="0 0 18 18"><path d="M1 5 V1 H5 M13 1 H17 V5 M17 13 V17 H13 M5 17 H1 V13" fill="none" stroke="#bbb" stroke-width="1.2"/><rect x="4" y="4" width="10" height="10" fill="#e6e6e6"/></svg><div class="t" style="left:43px;top:40px;color:#e6e6e6">Object Mode</div><svg style="left:135px;top:47px" width="10" height="6" viewBox="0 0 10 6"><path d="M1 1 L5 5 L9 1" stroke="#e6e6e6" stroke-width="1.5" fill="none"/></svg><div class="a" style="left:155px;top:36px;width:48px;height:23px;background:#a6a6a6;border-radius:5px"></div><div class="t" style="left:163px;top:40px;color:#1a1a1a">View</div><div class="a" style="left:205px;top:36px;width:56px;height:23px;background:#a6a6a6;border-radius:5px"></div><div class="t" style="left:213px;top:40px;color:#1a1a1a">Select</div><div class="a" style="left:263px;top:36px;width:42px;height:23px;background:#a6a6a6;border-radius:5px"></div><div class="t" style="left:270px;top:40px;color:#1a1a1a">Add</div><div class="a" style="left:307px;top:36px;width:58px;height:23px;background:#a6a6a6;border-radius:5px"></div><div class="t" style="left:315px;top:40px;color:#1a1a1a">Object</div><div class="a" style="left:1266px;top:35px;width:40px;height:25px;background:#3d3d3d;border-radius:5px"></div><svg style="left:1270px;top:38px" width="20" height="20" viewBox="0 0 20 20"><path d="M1 6 L12 12 L7 13 L5 18 Z" fill="#e6e6e6"/><path d="M8 5 Q13 -1 18 5 Q13 11 8 5 Z" fill="none" stroke="#e6e6e6" stroke-width="1.3"/><circle cx="13" cy="5" r="1.6" fill="#e6e6e6"/></svg><svg style="left:1291px;top:47px" width="10" height="6" viewBox="0 0 10 6"><path d="M1 1 L5 5 L9 1" stroke="#e6e6e6" stroke-width="1.5" fill="none"/></svg><div class="a" style="left:1312px;top:35px;width:51px;height:25px;background:#3d3d3d;border-radius:5px"></div><div class="a" style="left:1312px;top:35px;width:24px;height:25px;background:#5b7fbd;border-radius:5px 0 0 5px"></div><svg style="left:1315px;top:38px" width="19" height="19" viewBox="0 0 19 19"><path d="M3 16 Q5 6 16 3 M11 2 H16 V7" fill="none" stroke="#e6e6e6" stroke-width="1.3"/><circle cx="4" cy="15" r="2" fill="none" stroke="#e6e6e6" stroke-width="1.3"/></svg><svg style="left:1343px;top:47px" width="10" height="6" viewBox="0 0 10 6"><path d="M1 1 L5 5 L9 1" stroke="#e6e6e6" stroke-width="1.5" fill="none"/></svg><div class="a" style="left:1368px;top:35px;width:50px;height:25px;background:#3d3d3d;border-radius:5px"></div><div class="a" style="left:1368px;top:35px;width:24px;height:25px;background:#5b7fbd;border-radius:5px 0 0 5px"></div><svg style="left:1371px;top:38px" width="19" height="19" viewBox="0 0 19 19"><circle cx="7" cy="12" r="5" fill="none" stroke="#e6e6e6" stroke-width="1.4"/><circle cx="11" cy="8" r="5" fill="#e6e6e6"/></svg><svg style="left:1399px;top:47px" width="10" height="6" viewBox="0 0 10 6"><path d="M1 1 L5 5 L9 1" stroke="#e6e6e6" stroke-width="1.5" fill="none"/></svg><div class="a" style="left:1424px;top:35px;width:24px;height:25px;background:#dcdcdc;border-radius:5px"></div><svg style="left:1428px;top:39px" width="17" height="17" viewBox="0 0 17 17"><rect x="4" y="1" width="11" height="11" fill="none" stroke="#3d3d3d" stroke-width="1.3"/><rect x="1.5" y="4.5" width="11" height="11" fill="#dcdcdc" stroke="#3d3d3d" stroke-width="1.3"/><path d="M5 8 V12 H9" stroke="#3d3d3d" stroke-dasharray="1.5 1" fill="none"/></svg><div class="a" style="left:1455px;top:35px;width:122px;height:25px;background:#3d3d3d;border-radius:5px"></div><div class="a" style="left:1479px;top:35px;width:24px;height:25px;background:#5b7fbd"></div><svg style="left:1458px;top:38px" width="19" height="19" viewBox="0 0 19 19"><circle cx="9.5" cy="9.5" r="7.5" fill="none" stroke="#e6e6e6" stroke-width="1.3"/><ellipse cx="9.5" cy="9.5" rx="3.5" ry="7.5" fill="none" stroke="#e6e6e6" stroke-width="1.1"/><path d="M2 9.5 H17" stroke="#e6e6e6" stroke-width="1.1"/></svg><svg style="left:1482px;top:38px" width="19" height="19" viewBox="0 0 19 19"><circle cx="9.5" cy="9.5" r="8" fill="#ffffff"/></svg><svg style="left:1506px;top:38px" width="19" height="19" viewBox="0 0 19 19"><circle cx="9.5" cy="9.5" r="7.5" fill="none" stroke="#e6e6e6" stroke-width="1.3"/><path d="M9.5 2 A7.5 7.5 0 0 0 9.5 17 Z" fill="#e6e6e6"/></svg><svg style="left:1530px;top:38px" width="19" height="19" viewBox="0 0 19 19"><circle cx="9.5" cy="9.5" r="7.5" fill="none" stroke="#e6e6e6" stroke-width="1.3"/><path d="M5 7 A5 5 0 0 1 10 4" fill="none" stroke="#e6e6e6" stroke-width="1.5"/></svg><svg style="left:1558px;top:47px" width="10" height="6" viewBox="0 0 10 6"><path d="M1 1 L5 5 L9 1" stroke="#e6e6e6" stroke-width="1.5" fill="none"/></svg><div class="a" style="left:10px;top:74px;width:53px;height:84px;background:#3d3d3d;border-radius:5px"></div><div class="a" style="left:10px;top:74px;width:53px;height:42px;background:#5b7fbd;border-radius:5px 5px 0 0"></div><div class="a" style="left:10px;top:116px;width:53px;height:1px;background:#353535"></div><div class="a" style="left:10px;top:165px;width:53px;height:171px;background:#3d3d3d;border-radius:5px"></div><div class="a" style="left:10px;top:208px;width:53px;height:1px;background:#353535"></div><div class="a" style="left:10px;top:250px;width:53px;height:1px;background:#353535"></div><div class="a" style="left:10px;top:293px;width:53px;height:1px;background:#353535"></div><div class="a" style="left:10px;top:343px;width:53px;height:85px;background:#3d3d3d;border-radius:5px"></div><div class="a" style="left:10px;top:385px;width:53px;height:1px;background:#353535"></div><svg style="left:55px;top:111px" width="5" height="5" viewBox="0 0 5 5"><path d="M5 0 V5 H0 Z" fill="#8a8a8a"/></svg><svg style="left:55px;top:286px" width="5" height="5" viewBox="0 0 5 5"><path d="M5 0 V5 H0 Z" fill="#8a8a8a"/></svg><svg style="left:55px;top:378px" width="5" height="5" viewBox="0 0 5 5"><path d="M5 0 V5 H0 Z" fill="#8a8a8a"/></svg><svg style="left:21px;top:81px" width="28" height="28" viewBox="0 0 28 28"><rect x="1.5" y="1.5" width="25" height="24" fill="none" stroke="#f0a22e" stroke-width="2" stroke-dasharray="4.5 3"/><path d="M10 8 L19 15 L14 16 L11 20 Z" fill="#e6e6e6"/></svg><svg style="left:20px;top:121px" width="31" height="31" viewBox="0 0 31 31"><circle cx="15.5" cy="15.5" r="14.3" fill="none" stroke="#eee" stroke-width="2"/><circle cx="15.5" cy="15.5" r="14.3" fill="none" stroke="#a83030" stroke-width="2" stroke-dasharray="6 6"/><path d="M15.5 6.5 V12.5 M15.5 18.5 V24.5 M6.5 15.5 H12.5 M18.5 15.5 H24.5" stroke="#9a9a9a" stroke-width="1.6"/></svg><svg style="left:19px;top:171px" width="32" height="32" viewBox="0 0 32 32"><path d="M16 1 L11.5 6.5 H20.5 Z M16 31 L11.5 25.5 H20.5 Z M1 16 L6.5 11.5 V20.5 Z M31 16 L25.5 11.5 V20.5 Z" fill="#e6e6e6"/><path d="M16 8 V13 M16 19 V24 M8 16 H13 M19 16 H24" stroke="#e6e6e6" stroke-width="1.8"/></svg><svg style="left:20px;top:214px" width="30" height="30" viewBox="0 0 30 30"><path d="M15 11 L19 15 L15 19 L11 15 Z" fill="#e6e6e6"/><path d="M5 12 A10 10 0 0 1 25 12 M25 18 A10 10 0 0 1 5 18" fill="none" stroke="#e6e6e6" stroke-width="1.5"/><path d="M2 15 L5 11 L8 15 Z M22 15 L25 19 L28 15 Z" fill="#e6e6e6"/></svg><svg style="left:20px;top:257px" width="30" height="30" viewBox="0 0 30 30"><rect x="4" y="13" width="12" height="12" fill="#e6e6e6"/><path d="M10 4 H26 V20" fill="none" stroke="#e6e6e6" stroke-width="1.3"/><path d="M14 16 L23 7 M18 7 H23 V12" stroke="#e6e6e6" stroke-width="1.5" fill="none"/></svg><svg style="left:20px;top:300px" width="30" height="30" viewBox="0 0 30 30"><rect x="10" y="10" width="10" height="10" fill="#e6e6e6"/><circle cx="15" cy="15" r="11" fill="none" stroke="#e6e6e6" stroke-width="1.3" stroke-dasharray="8 4"/><path d="M15 1 L12 5 H18 Z M15 29 L12 25 H18 Z M1 15 L5 12 V18 Z M29 15 L25 12 V18 Z" fill="#e6e6e6"/></svg><svg style="left:20px;top:350px" width="30" height="30" viewBox="0 0 30 30"><path d="M6 20 L20 5 L24 9 L10 24 L4 26 Z" fill="none" stroke="#e6e6e6" stroke-width="1.6"/><path d="M3 26 Q10 16 17 24 T28 20" fill="none" stroke="#7dd8a6" stroke-width="1.6"/></svg><svg style="left:20px;top:392px" width="30" height="32" viewBox="0 0 30 32"><path d="M5 3 V29 H28" fill="none" stroke="#e6e6e6" stroke-width="2"/><path d="M7 26 V12 A14 14 0 0 1 21 26 Z" fill="#7dd8a6"/><path d="M5 8 H8 M5 13 H8 M5 18 H8 M10 29 V26 M15 29 V26 M20 29 V26" stroke="#e6e6e6" stroke-width="1"/></svg><div class="t" style="left:84px;top:76px;color:#f0f0f0;text-shadow:1px 1px 1px rgba(0,0,0,0.5)">Front Orthographic</div><div class="t" style="left:84px;top:99px;color:#f0f0f0;text-shadow:1px 1px 1px rgba(0,0,0,0.5)">(1) Collection | 00372:15:0</div><div class="t" style="left:84px;top:122px;color:#f0f0f0;text-shadow:1px 1px 1px rgba(0,0,0,0.5)">10 Centimeters</div><svg style="left:1470px;top:70px" width="110" height="170" viewBox="0 0 110 170">
<line x1="53" y1="55" x2="53" y2="22" stroke="#3e8ef0" stroke-width="2.5"/>
<line x1="53" y1="55" x2="93" y2="55" stroke="#f0304c" stroke-width="2.5"/>
<circle cx="12" cy="55" r="7.5" fill="#b2535e"/>
<circle cx="53" cy="96" r="7.5" fill="#4272b8"/>
<circle cx="53" cy="14" r="9" fill="#3e8ef0"/>
<circle cx="93" cy="55" r="9" fill="#f0304c"/>
<circle cx="53" cy="55" r="9" fill="#7cc818" stroke="#5a8a20" stroke-width="1"/>
<text x="53" y="19" font-size="13" text-anchor="middle" fill="#111" font-family="Liberation Sans">Z</text>
<text x="93" y="60" font-size="13" text-anchor="middle" fill="#111" font-family="Liberation Sans">X</text>
<text x="53" y="60" font-size="13" text-anchor="middle" fill="#111" font-family="Liberation Sans">Y</text>
</svg><div class="a" style="left:1540px;top:177px;width:34px;height:34px;background:#8f8f8f;border-radius:50%"></div><div class="a" style="left:1540px;top:215px;width:34px;height:34px;background:#8f8f8f;border-radius:50%"></div><div class="a" style="left:1540px;top:253px;width:34px;height:34px;background:#8f8f8f;border-radius:50%"></div><div class="a" style="left:1540px;top:291px;width:34px;height:34px;background:#8f8f8f;border-radius:50%"></div><svg style="left:1546px;top:184px" width="22" height="22" viewBox="0 0 22 22"><circle cx="13" cy="8" r="6" fill="none" stroke="#3d3d3d" stroke-width="2"/><path d="M13 5 V11 M10 8 H16" stroke="#3d3d3d" stroke-width="1.5"/><path d="M8 13 L2 19" stroke="#3d3d3d" stroke-width="3" stroke-linecap="round"/></svg><svg style="left:1546px;top:222px" width="22" height="22" viewBox="0 0 22 22"><path d="M6 20 C3 16 2 12 3 10 L6 13 V4 M6 12 V3 A1 1 0 0 1 9 3 V11 M9 10 V2 A1 1 0 0 1 12 2 V11 M12 10 V3 A1 1 0 0 1 15 3 V12 M15 11 V6 A1 1 0 0 1 18 6 V14 C18 18 15 20 13 20 Z" fill="#3d3d3d" stroke="#3d3d3d" stroke-width="1.2"/></svg><svg style="left:1546px;top:260px" width="22" height="22" viewBox="0 0 22 22"><circle cx="7" cy="6" r="3.5" fill="#3d3d3d"/><circle cx="14" cy="5" r="4" fill="#3d3d3d"/><rect x="4" y="10" width="12" height="8" fill="#3d3d3d"/><path d="M16 14 L21 11 V19 Z" fill="#3d3d3d"/></svg><svg style="left:1546px;top:298px" width="22" height="22" viewBox="0 0 22 22"><rect x="2" y="2" width="18" height="18" fill="none" stroke="#3d3d3d" stroke-width="1.5"/><path d="M2 8 H20 M2 14 H20 M8 2 V20 M14 2 V20" stroke="#3d3d3d" stroke-width="1.5"/></svg><div class="a" style="left:1575px;top:83px;width:10px;height:26px;background:#5c5c5c;border-radius:4px 0 0 4px"></div><svg style="left:1576px;top:90px" width="8" height="12" viewBox="0 0 8 12"><path d="M6 1 L2 6 L6 11" stroke="#999" stroke-width="1.2" fill="none"/></svg></div><div class="a" style="left:0px;top:57px;width:1px;height:997px;background:#2e2e2e"></div><div class="a" style="left:1588px;top:57px;width:331px;height:636px;background:#9e9e9e;border-radius:7px;overflow:hidden"><div class="a" style="left:0px;top:0px;width:331px;height:31px;background:#a6a6a6"></div><div class="a" style="left:10px;top:3px;width:40px;height:25px;background:#3d3d3d;border-radius:5px"></div><svg style="left:16px;top:7px" width="22" height="18" viewBox="0 0 22 18"><rect x="1" y="1" width="7" height="3" fill="#e6e6e6"/><path d="M3.5 4 V14 H8 M3.5 9 H8" stroke="#e6e6e6" fill="none"/><rect x="9" y="7" width="8" height="3.5" fill="#e6e6e6"/><rect x="9" y="12.5" width="8" height="3.5" fill="#e6e6e6"/></svg><svg style="left:38px;top:13px" width="10" height="6" viewBox="0 0 10 6"><path d="M1 1 L5 5 L9 1" stroke="#e6e6e6" stroke-width="1.5" fill="none"/></svg><div class="a" style="left:56px;top:3px;width:40px;height:25px;background:#3d3d3d;border-radius:5px"></div><svg style="left:61px;top:6px" width="20" height="20" viewBox="0 0 20 20"><rect x="6" y="2" width="11" height="10" fill="none" stroke="#e6e6e6" stroke-width="1.3"/><path d="M4 4 V14 H14 M2 6 V16 H12" fill="none" stroke="#e6e6e6" stroke-width="1.1"/><path d="M8 10 L11 6 L13 9 L15 4 V10 Z" fill="#e6e6e6"/></svg><svg style="left:84px;top:13px" width="10" height="6" viewBox="0 0 10 6"><path d="M1 1 L5 5 L9 1" stroke="#e6e6e6" stroke-width="1.5" fill="none"/></svg><div class="a" style="left:115px;top:3px;width:142px;height:25px;background:#252525;border-radius:5px"></div><svg style="left:122px;top:6px" width="18" height="18" viewBox="0 0 18 18"><circle cx="11" cy="7" r="5" fill="none" stroke="#e6e6e6" stroke-width="1.4"/><path d="M7.5 10.5 L2 16" stroke="#e6e6e6" stroke-width="1.6"/></svg><div class="a" style="left:277px;top:3px;width:40px;height:25px;background:#3d3d3d;border-radius:5px"></div><svg style="left:283px;top:6px" width="18" height="18" viewBox="0 0 18 18"><path d="M1 2 H16 L10 9 V16 L7 14 V9 Z" fill="none" stroke="#e6e6e6" stroke-width="1.3"/></svg><svg style="left:304px;top:13px" width="10" height="6" viewBox="0 0 10 6"><path d="M1 1 L5 5 L9 1" stroke="#e6e6e6" stroke-width="1.5" fill="none"/></svg><div class="a" style="left:324px;top:4px;width:12px;height:24px;background:#d8d8d8;border-radius:5px 0 0 5px"></div><div class="a" style="left:328px;top:9px;width:6px;height:5px;border:1.3px solid #2a2a2a;background:#e8e8e8"></div><div class="a" style="left:329px;top:13px;width:5px;height:12px;border:1.3px solid #2a2a2a;background:#e8e8e8"></div><div class="a" style="left:0px;top:32px;width:331px;height:25px;background:#9b9b9b"></div><svg style="left:28px;top:36px" width="20" height="19" viewBox="0 0 20 19"><rect x="1.5" y="1.5" width="17" height="5" fill="#e6e6e6" stroke="#222" stroke-width="1.2"/><rect x="2.5" y="6.5" width="15" height="11" fill="#e6e6e6" stroke="#222" stroke-width="1.2"/><rect x="8" y="9" width="4" height="1.8" rx="0.9" fill="#222"/></svg><div class="t" style="left:55px;top:38px;color:#111">Scene Collection</div><div class="a" style="left:0px;top:57px;width:331px;height:25px;background:#a1a1a1"></div><div class="a" style="left:50px;top:58px;width:23px;height:23px;background:#7a7a7a;border-radius:5px;border:1px solid #5a5a5a"></div><svg style="left:52px;top:60px" width="20" height="19" viewBox="0 0 20 19"><rect x="1.5" y="1.5" width="17" height="5" fill="#e6e6e6" stroke="#222" stroke-width="1.2"/><rect x="2.5" y="6.5" width="15" height="11" fill="#e6e6e6" stroke="#222" stroke-width="1.2"/><rect x="8" y="9" width="4" height="1.8" rx="0.9" fill="#222"/></svg><div class="t" style="left:80px;top:63px;color:#111">Collection</div><div class="a" style="left:278px;top:64px;width:13px;height:13px;background:#1a1a1a;border-radius:2px"></div><svg style="left:279px;top:65px" width="11" height="11" viewBox="0 0 11 11"><path d="M2 5.5 L4.5 8 L9 3" stroke="#cccccc" stroke-width="2.2" fill="none"/></svg><svg style="left:302px;top:63px" width="18" height="14" viewBox="0 0 18 14"><path d="M0.5 7 Q9 -3 17.5 7 Q9 17 0.5 7 Z" fill="#1a1a1a"/><circle cx="9" cy="7" r="3.6" fill="#a8a8a8"/><circle cx="9" cy="7" r="1.8" fill="#1a1a1a"/></svg><div class="a" style="left:0px;top:82px;width:331px;height:25px;background:#979797"></div><svg style="left:34px;top:91px" width="10" height="8" viewBox="0 0 10 8"><path d="M0 0 H9 L4.5 8 Z" fill="#555"/></svg><svg style="left:53px;top:85px" width="20" height="20" viewBox="0 0 20 20"><circle cx="11" cy="3" r="2.5" fill="#c99a78"/><path d="M2 6 H19 M10.5 6 L9 11 L4 18 M9 11 L15 18" stroke="#c99a78" stroke-width="3" fill="none" stroke-linecap="round" stroke-linejoin="round"/></svg><div class="t" style="left:80px;top:88px;color:#666">00372</div><svg style="left:302px;top:94px" width="18" height="8" viewBox="0 0 18 8"><path d="M1 1 Q9 9 17 1" stroke="#e0e0e0" stroke-width="1.5" fill="none"/></svg><div class="a" style="left:0px;top:107px;width:331px;height:25px;background:#a1a1a1"></div><svg style="left:78px;top:109px" width="20" height="21" viewBox="0 0 20 21"><circle cx="12" cy="3" r="2.5" fill="#3fd0a8" stroke="#2a2a2a" stroke-width="0.8"/><path d="M2 2 L7 7 H13 L17 12 M11 7 L8 13 L3 19 M8 13 L15 17" stroke="#2a2a2a" stroke-width="4" fill="none" stroke-linecap="round" stroke-linejoin="round"/><path d="M2 2 L7 7 H13 L17 12 M11 7 L8 13 L3 19 M8 13 L15 17" stroke="#3fd0a8" stroke-width="2.2" fill="none" stroke-linecap="round" stroke-linejoin="round"/></svg><div class="t" style="left:105px;top:113px;color:#111">Pose</div><div class="a" style="left:36px;top:107px;width:1px;height:25px;border-left:1px dashed #5a5a5a"></div><div class="a" style="left:0px;top:132px;width:331px;height:25px;background:#9b9b9b"></div><svg style="left:59px;top:140px" width="8" height="10" viewBox="0 0 8 10"><path d="M1 1.5 L8 5 L1 8.5 Z" fill="#111"/></svg><svg style="left:78px;top:134px" width="20" height="21" viewBox="0 0 20 21"><rect x="1" y="4" width="5" height="5" fill="none" stroke="#2a2a2a" stroke-width="3"/><rect x="1" y="4" width="5" height="5" fill="none" stroke="#3fd0a8" stroke-width="1.5"/><circle cx="12" cy="3" r="2.5" fill="#3fd0a8" stroke="#2a2a2a" stroke-width="0.8"/><path d="M6 7 H19 M12 7 L11 11 L5 19 M11 11 L17 19" stroke="#2a2a2a" stroke-width="4" fill="none" stroke-linecap="round"/><path d="M6 7 H19 M12 7 L11 11 L5 19 M11 11 L17 19" stroke="#3fd0a8" stroke-width="2.2" fill="none" stroke-linecap="round"/></svg><div class="t" style="left:105px;top:138px;color:#111">00372</div><svg style="left:172px;top:135px" width="21" height="21" viewBox="0 0 21 21"><path d="M3 4 L15 14" stroke="#2a2a2a" stroke-width="6" stroke-linecap="round"/><circle cx="3" cy="6" r="3" fill="#3fd0a8" stroke="#2a2a2a"/><circle cx="5" cy="3" r="3" fill="#3fd0a8" stroke="#2a2a2a"/><circle cx="14" cy="17" r="3" fill="#3fd0a8" stroke="#2a2a2a"/><circle cx="17" cy="14" r="3" fill="#3fd0a8" stroke="#2a2a2a"/><path d="M4 5 L16 15" stroke="#3fd0a8" stroke-width="4" stroke-linecap="round"/></svg><div class="a" style="left:36px;top:132px;width:1px;height:25px;border-left:1px dashed #5a5a5a"></div><div class="a" style="left:0px;top:157px;width:331px;height:25px;background:#a1a1a1"></div><svg style="left:59px;top:165px" width="8" height="10" viewBox="0 0 8 10"><path d="M1 1.5 L8 5 L1 8.5 Z" fill="#111"/></svg><svg style="left:77px;top:160px" width="20" height="20" viewBox="0 0 20 20"><path d="M2 3.5 Q2 2 3.5 2 H16.5 Q18 2 17.4 3.5 L11 18 Q10 19.5 9 18 L2.6 3.5 Z" fill="#e9a062" stroke="#333" stroke-width="1.6" stroke-linejoin="round"/><path d="M7.6 5.8 H12.4 L10 10.5 Z" fill="none" stroke="#333" stroke-width="1.3" stroke-linejoin="round"/></svg><div class="t" style="left:105px;top:163px;color:#111">00372:0:0</div><svg style="left:197px;top:161px" width="19" height="20" viewBox="0 0 19 20"><rect x="1" y="5" width="5" height="5" fill="#1a1a1a"/><rect x="1" y="11" width="5" height="5" fill="#1a1a1a"/><rect x="7" y="8" width="5" height="5" fill="#1a1a1a"/><rect x="7" y="14" width="5" height="5" fill="#1a1a1a"/><rect x="7.5" y="2.5" width="4" height="4" fill="none" stroke="#444"/><rect x="13.5" y="5.5" width="4" height="4" fill="none" stroke="#444"/><rect x="13.5" y="11.5" width="4" height="4" fill="none" stroke="#444"/></svg><svg style="left:221px;top:159px" width="20" height="21" viewBox="0 0 20 21"><path d="M3 3 H17 L10 18 Z" fill="none" stroke="#2a2a2a" stroke-width="4" stroke-linejoin="round"/><path d="M3 3 H17 L10 18 Z" fill="none" stroke="#3fd0a8" stroke-width="2" stroke-linejoin="round"/><rect x="0.5" y="0.5" width="5" height="5" fill="#3fd0a8" stroke="#2a2a2a"/><rect x="14.5" y="0.5" width="5" height="5" fill="#3fd0a8" stroke="#2a2a2a"/><rect x="7.5" y="15.5" width="5" height="5" fill="#3fd0a8" stroke="#2a2a2a"/><rect x="2" y="2" width="2" height="2" fill="#2a2a2a"/><rect x="16" y="2" width="2" height="2" fill="#2a2a2a"/><rect x="9" y="17" width="2" height="2" fill="#2a2a2a"/></svg><svg style="left:302px;top:163px" width="18" height="14" viewBox="0 0 18 14"><path d="M0.5 7 Q9 -3 17.5 7 Q9 17 0.5 7 Z" fill="#1a1a1a"/><circle cx="9" cy="7" r="3.6" fill="#a8a8a8"/><circle cx="9" cy="7" r="1.8" fill="#1a1a1a"/></svg><div class="a" style="left:36px;top:157px;width:1px;height:25px;border-left:1px dashed #5a5a5a"></div><div class="a" style="left:0px;top:182px;width:331px;height:25px;background:#9b9b9b"></div><svg style="left:59px;top:190px" width="8" height="10" viewBox="0 0 8 10"><path d="M1 1.5 L8 5 L1 8.5 Z" fill="#111"/></svg><svg style="left:77px;top:185px" width="20" height="20" viewBox="0 0 20 20"><path d="M2 3.5 Q2 2 3.5 2 H16.5 Q18 2 17.4 3.5 L11 18 Q10 19.5 9 18 L2.6 3.5 Z" fill="#e9a062" stroke="#333" stroke-width="1.6" stroke-linejoin="round"/><path d="M7.6 5.8 H12.4 L10 10.5 Z" fill="none" stroke="#333" stroke-width="1.3" stroke-linejoin="round"/></svg><div class="t" style="left:105px;top:188px;color:#111">00372:0:1</div><svg style="left:197px;top:186px" width="19" height="20" viewBox="0 0 19 20"><rect x="1" y="5" width="5" height="5" fill="#1a1a1a"/><rect x="1" y="11" width="5" height="5" fill="#1a1a1a"/><rect x="7" y="8" width="5" height="5" fill="#1a1a1a"/><rect x="7" y="14" width="5" height="5" fill="#1a1a1a"/><rect x="7.5" y="2.5" width="4" height="4" fill="none" stroke="#444"/><rect x="13.5" y="5.5" width="4" height="4" fill="none" stroke="#444"/><rect x="13.5" y="11.5" width="4" height="4" fill="none" stroke="#444"/></svg><svg style="left:221px;top:184px" width="20" height="21" viewBox="0 0 20 21"><path d="M3 3 H17 L10 18 Z" fill="none" stroke="#2a2a2a" stroke-width="4" stroke-linejoin="round"/><path d="M3 3 H17 L10 18 Z" fill="none" stroke="#3fd0a8" stroke-width="2" stroke-linejoin="round"/><rect x="0.5" y="0.5" width="5" height="5" fill="#3fd0a8" stroke="#2a2a2a"/><rect x="14.5" y="0.5" width="5" height="5" fill="#3fd0a8" stroke="#2a2a2a"/><rect x="7.5" y="15.5" width="5" height="5" fill="#3fd0a8" stroke="#2a2a2a"/><rect x="2" y="2" width="2" height="2" fill="#2a2a2a"/><rect x="16" y="2" width="2" height="2" fill="#2a2a2a"/><rect x="9" y="17" width="2" height="2" fill="#2a2a2a"/></svg><svg style="left:302px;top:188px" width="18" height="14" viewBox="0 0 18 14"><path d="M0.5 7 Q9 -3 17.5 7 Q9 17 0.5 7 Z" fill="#1a1a1a"/><circle cx="9" cy="7" r="3.6" fill="#a8a8a8"/><circle cx="9" cy="7" r="1.8" fill="#1a1a1a"/></svg><div class="a" style="left:36px;top:182px;width:1px;height:25px;border-left:1px dashed #5a5a5a"></div><div class="a" style="left:0px;top:207px;width:331px;height:25px;background:#a1a1a1"></div><svg style="left:59px;top:215px" width="8" height="10" viewBox="0 0 8 10"><path d="M1 1.5 L8 5 L1 8.5 Z" fill="#111"/></svg><svg style="left:77px;top:210px" width="20" height="20" viewBox="0 0 20 20"><path d="M2 3.5 Q2 2 3.5 2 H16.5 Q18 2 17.4 3.5 L11 18 Q10 19.5 9 18 L2.6 3.5 Z" fill="#e9a062" stroke="#333" stroke-width="1.6" stroke-linejoin="round"/><path d="M7.6 5.8 H12.4 L10 10.5 Z" fill="none" stroke="#333" stroke-width="1.3" stroke-linejoin="round"/></svg><div class="t" style="left:105px;top:213px;color:#111">00372:0:2</div><svg style="left:197px;top:211px" width="19" height="20" viewBox="0 0 19 20"><rect x="1" y="5" width="5" height="5" fill="#1a1a1a"/><rect x="1" y="11" width="5" height="5" fill="#1a1a1a"/><rect x="7" y="8" width="5" height="5" fill="#1a1a1a"/><rect x="7" y="14" width="5" height="5" fill="#1a1a1a"/><rect x="7.5" y="2.5" width="4" height="4" fill="none" stroke="#444"/><rect x="13.5" y="5.5" width="4" height="4" fill="none" stroke="#444"/><rect x="13.5" y="11.5" width="4" height="4" fill="none" stroke="#444"/></svg><svg style="left:221px;top:209px" width="20" height="21" viewBox="0 0 20 21"><path d="M3 3 H17 L10 18 Z" fill="none" stroke="#2a2a2a" stroke-width="4" stroke-linejoin="round"/><path d="M3 3 H17 L10 18 Z" fill="none" stroke="#3fd0a8" stroke-width="2" stroke-linejoin="round"/><rect x="0.5" y="0.5" width="5" height="5" fill="#3fd0a8" stroke="#2a2a2a"/><rect x="14.5" y="0.5" width="5" height="5" fill="#3fd0a8" stroke="#2a2a2a"/><rect x="7.5" y="15.5" width="5" height="5" fill="#3fd0a8" stroke="#2a2a2a"/><rect x="2" y="2" width="2" height="2" fill="#2a2a2a"/><rect x="16" y="2" width="2" height="2" fill="#2a2a2a"/><rect x="9" y="17" width="2" height="2" fill="#2a2a2a"/></svg><svg style="left:302px;top:213px" width="18" height="14" viewBox="0 0 18 14"><path d="M0.5 7 Q9 -3 17.5 7 Q9 17 0.5 7 Z" fill="#1a1a1a"/><circle cx="9" cy="7" r="3.6" fill="#a8a8a8"/><circle cx="9" cy="7" r="1.8" fill="#1a1a1a"/></svg><div class="a" style="left:36px;top:207px;width:1px;height:25px;border-left:1px dashed #5a5a5a"></div><div class="a" style="left:0px;top:232px;width:331px;height:25px;background:#9b9b9b"></div><svg style="left:59px;top:240px" width="8" height="10" viewBox="0 0 8 10"><path d="M1 1.5 L8 5 L1 8.5 Z" fill="#111"/></svg><svg style="left:77px;top:235px" width="20" height="20" viewBox="0 0 20 20"><path d="M2 3.5 Q2 2 3.5 2 H16.5 Q18 2 17.4 3.5 L11 18 Q10 19.5 9 18 L2.6 3.5 Z" fill="#e9a062" stroke="#333" stroke-width="1.6" stroke-linejoin="round"/><path d="M7.6 5.8 H12.4 L10 10.5 Z" fill="none" stroke="#333" stroke-width="1.3" stroke-linejoin="round"/></svg><div class="t" style="left:105px;top:238px;color:#111">00372:1:0</div><svg style="left:197px;top:236px" width="19" height="20" viewBox="0 0 19 20"><rect x="1" y="5" width="5" height="5" fill="#1a1a1a"/><rect x="1" y="11" width="5" height="5" fill="#1a1a1a"/><rect x="7" y="8" width="5" height="5" fill="#1a1a1a"/><rect x="7" y="14" width="5" height="5" fill="#1a1a1a"/><rect x="7.5" y="2.5" width="4" height="4" fill="none" stroke="#444"/><rect x="13.5" y="5.5" width="4" height="4" fill="none" stroke="#444"/><rect x="13.5" y="11.5" width="4" height="4" fill="none" stroke="#444"/></svg><svg style="left:221px;top:234px" width="20" height="21" viewBox="0 0 20 21"><path d="M3 3 H17 L10 18 Z" fill="none" stroke="#2a2a2a" stroke-width="4" stroke-linejoin="round"/><path d="M3 3 H17 L10 18 Z" fill="none" stroke="#3fd0a8" stroke-width="2" stroke-linejoin="round"/><rect x="0.5" y="0.5" width="5" height="5" fill="#3fd0a8" stroke="#2a2a2a"/><rect x="14.5" y="0.5" width="5" height="5" fill="#3fd0a8" stroke="#2a2a2a"/><rect x="7.5" y="15.5" width="5" height="5" fill="#3fd0a8" stroke="#2a2a2a"/><rect x="2" y="2" width="2" height="2" fill="#2a2a2a"/><rect x="16" y="2" width="2" height="2" fill="#2a2a2a"/><rect x="9" y="17" width="2" height="2" fill="#2a2a2a"/></svg><svg style="left:302px;top:238px" width="18" height="14" viewBox="0 0 18 14"><path d="M0.5 7 Q9 -3 17.5 7 Q9 17 0.5 7 Z" fill="#1a1a1a"/><circle cx="9" cy="7" r="3.6" fill="#a8a8a8"/><circle cx="9" cy="7" r="1.8" fill="#1a1a1a"/></svg><div class="a" style="left:36px;top:232px;width:1px;height:25px;border-left:1px dashed #5a5a5a"></div><div class="a" style="left:0px;top:257px;width:331px;height:25px;background:#a1a1a1"></div><svg style="left:59px;top:265px" width="8" height="10" viewBox="0 0 8 10"><path d="M1 1.5 L8 5 L1 8.5 Z" fill="#111"/></svg><svg style="left:77px;top:260px" width="20" height="20" viewBox="0 0 20 20"><path d="M2 3.5 Q2 2 3.5 2 H16.5 Q18 2 17.4 3.5 L11 18 Q10 19.5 9 18 L2.6 3.5 Z" fill="#e9a062" stroke="#333" stroke-width="1.6" stroke-linejoin="round"/><path d="M7.6 5.8 H12.4 L10 10.5 Z" fill="none" stroke="#333" stroke-width="1.3" stroke-linejoin="round"/></svg><div class="t" style="left:105px;top:263px;color:#111">00372:2:0</div><svg style="left:197px;top:261px" width="19" height="20" viewBox="0 0 19 20"><rect x="1" y="5" width="5" height="5" fill="#1a1a1a"/><rect x="1" y="11" width="5" height="5" fill="#1a1a1a"/><rect x="7" y="8" width="5" height="5" fill="#1a1a1a"/><rect x="7" y="14" width="5" height="5" fill="#1a1a1a"/><rect x="7.5" y="2.5" width="4" height="4" fill="none" stroke="#444"/><rect x="13.5" y="5.5" width="4" height="4" fill="none" stroke="#444"/><rect x="13.5" y="11.5" width="4" height="4" fill="none" stroke="#444"/></svg><svg style="left:221px;top:259px" width="20" height="21" viewBox="0 0 20 21"><path d="M3 3 H17 L10 18 Z" fill="none" stroke="#2a2a2a" stroke-width="4" stroke-linejoin="round"/><path d="M3 3 H17 L10 18 Z" fill="none" stroke="#3fd0a8" stroke-width="2" stroke-linejoin="round"/><rect x="0.5" y="0.5" width="5" height="5" fill="#3fd0a8" stroke="#2a2a2a"/><rect x="14.5" y="0.5" width="5" height="5" fill="#3fd0a8" stroke="#2a2a2a"/><rect x="7.5" y="15.5" width="5" height="5" fill="#3fd0a8" stroke="#2a2a2a"/><rect x="2" y="2" width="2" height="2" fill="#2a2a2a"/><rect x="16" y="2" width="2" height="2" fill="#2a2a2a"/><rect x="9" y="17" width="2" height="2" fill="#2a2a2a"/></svg><svg style="left:302px;top:263px" width="18" height="14" viewBox="0 0 18 14"><path d="M0.5 7 Q9 -3 17.5 7 Q9 17 0.5 7 Z" fill="#1a1a1a"/><circle cx="9" cy="7" r="3.6" fill="#a8a8a8"/><circle cx="9" cy="7" r="1.8" fill="#1a1a1a"/></svg><div class="a" style="left:36px;top:257px;width:1px;height:25px;border-left:1px dashed #5a5a5a"></div><div class="a" style="left:0px;top:282px;width:331px;height:25px;background:#9b9b9b"></div><svg style="left:59px;top:290px" width="8" height="10" viewBox="0 0 8 10"><path d="M1 1.5 L8 5 L1 8.5 Z" fill="#111"/></svg><svg style="left:77px;top:285px" width="20" height="20" viewBox="0 0 20 20"><path d="M2 3.5 Q2 2 3.5 2 H16.5 Q18 2 17.4 3.5 L11 18 Q10 19.5 9 18 L2.6 3.5 Z" fill="#e9a062" stroke="#333" stroke-width="1.6" stroke-linejoin="round"/><path d="M7.6 5.8 H12.4 L10 10.5 Z" fill="none" stroke="#333" stroke-width="1.3" stroke-linejoin="round"/></svg><div class="t" style="left:105px;top:288px;color:#111">00372:3:0</div><svg style="left:197px;top:286px" width="19" height="20" viewBox="0 0 19 20"><rect x="1" y="5" width="5" height="5" fill="#1a1a1a"/><rect x="1" y="11" width="5" height="5" fill="#1a1a1a"/><rect x="7" y="8" width="5" height="5" fill="#1a1a1a"/><rect x="7" y="14" width="5" height="5" fill="#1a1a1a"/><rect x="7.5" y="2.5" width="4" height="4" fill="none" stroke="#444"/><rect x="13.5" y="5.5" width="4" height="4" fill="none" stroke="#444"/><rect x="13.5" y="11.5" width="4" height="4" fill="none" stroke="#444"/></svg><svg style="left:221px;top:284px" width="20" height="21" viewBox="0 0 20 21"><path d="M3 3 H17 L10 18 Z" fill="none" stroke="#2a2a2a" stroke-width="4" stroke-linejoin="round"/><path d="M3 3 H17 L10 18 Z" fill="none" stroke="#3fd0a8" stroke-width="2" stroke-linejoin="round"/><rect x="0.5" y="0.5" width="5" height="5" fill="#3fd0a8" stroke="#2a2a2a"/><rect x="14.5" y="0.5" width="5" height="5" fill="#3fd0a8" stroke="#2a2a2a"/><rect x="7.5" y="15.5" width="5" height="5" fill="#3fd0a8" stroke="#2a2a2a"/><rect x="2" y="2" width="2" height="2" fill="#2a2a2a"/><rect x="16" y="2" width="2" height="2" fill="#2a2a2a"/><rect x="9" y="17" width="2" height="2" fill="#2a2a2a"/></svg><svg style="left:302px;top:288px" width="18" height="14" viewBox="0 0 18 14"><path d="M0.5 7 Q9 -3 17.5 7 Q9 17 0.5 7 Z" fill="#1a1a1a"/><circle cx="9" cy="7" r="3.6" fill="#a8a8a8"/><circle cx="9" cy="7" r="1.8" fill="#1a1a1a"/></svg><div class="a" style="left:36px;top:282px;width:1px;height:25px;border-left:1px dashed #5a5a5a"></div><div class="a" style="left:0px;top:307px;width:331px;height:25px;background:#a1a1a1"></div><svg style="left:59px;top:315px" width="8" height="10" viewBox="0 0 8 10"><path d="M1 1.5 L8 5 L1 8.5 Z" fill="#111"/></svg><svg style="left:77px;top:310px" width="20" height="20" viewBox="0 0 20 20"><path d="M2 3.5 Q2 2 3.5 2 H16.5 Q18 2 17.4 3.5 L11 18 Q10 19.5 9 18 L2.6 3.5 Z" fill="#e9a062" stroke="#333" stroke-width="1.6" stroke-linejoin="round"/><path d="M7.6 5.8 H12.4 L10 10.5 Z" fill="none" stroke="#333" stroke-width="1.3" stroke-linejoin="round"/></svg><div class="t" style="left:105px;top:313px;color:#111">00372:4:0</div><svg style="left:197px;top:311px" width="19" height="20" viewBox="0 0 19 20"><rect x="1" y="5" width="5" height="5" fill="#1a1a1a"/><rect x="1" y="11" width="5" height="5" fill="#1a1a1a"/><rect x="7" y="8" width="5" height="5" fill="#1a1a1a"/><rect x="7" y="14" width="5" height="5" fill="#1a1a1a"/><rect x="7.5" y="2.5" width="4" height="4" fill="none" stroke="#444"/><rect x="13.5" y="5.5" width="4" height="4" fill="none" stroke="#444"/><rect x="13.5" y="11.5" width="4" height="4" fill="none" stroke="#444"/></svg><svg style="left:221px;top:309px" width="20" height="21" viewBox="0 0 20 21"><path d="M3 3 H17 L10 18 Z" fill="none" stroke="#2a2a2a" stroke-width="4" stroke-linejoin="round"/><path d="M3 3 H17 L10 18 Z" fill="none" stroke="#3fd0a8" stroke-width="2" stroke-linejoin="round"/><rect x="0.5" y="0.5" width="5" height="5" fill="#3fd0a8" stroke="#2a2a2a"/><rect x="14.5" y="0.5" width="5" height="5" fill="#3fd0a8" stroke="#2a2a2a"/><rect x="7.5" y="15.5" width="5" height="5" fill="#3fd0a8" stroke="#2a2a2a"/><rect x="2" y="2" width="2" height="2" fill="#2a2a2a"/><rect x="16" y="2" width="2" height="2" fill="#2a2a2a"/><rect x="9" y="17" width="2" height="2" fill="#2a2a2a"/></svg><svg style="left:302px;top:313px" width="18" height="14" viewBox="0 0 18 14"><path d="M0.5 7 Q9 -3 17.5 7 Q9 17 0.5 7 Z" fill="#1a1a1a"/><circle cx="9" cy="7" r="3.6" fill="#a8a8a8"/><circle cx="9" cy="7" r="1.8" fill="#1a1a1a"/></svg><div class="a" style="left:36px;top:307px;width:1px;height:25px;border-left:1px dashed #5a5a5a"></div><div class="a" style="left:0px;top:332px;width:331px;height:25px;background:#9b9b9b"></div><svg style="left:59px;top:340px" width="8" height="10" viewBox="0 0 8 10"><path d="M1 1.5 L8 5 L1 8.5 Z" fill="#111"/></svg><svg style="left:77px;top:335px" width="20" height="20" viewBox="0 0 20 20"><path d="M2 3.5 Q2 2 3.5 2 H16.5 Q18 2 17.4 3.5 L11 18 Q10 19.5 9 18 L2.6 3.5 Z" fill="#e9a062" stroke="#333" stroke-width="1.6" stroke-linejoin="round"/><path d="M7.6 5.8 H12.4 L10 10.5 Z" fill="none" stroke="#333" stroke-width="1.3" stroke-linejoin="round"/></svg><div class="t" style="left:105px;top:338px;color:#111">00372:5:0</div><svg style="left:197px;top:336px" width="19" height="20" viewBox="0 0 19 20"><rect x="1" y="5" width="5" height="5" fill="#1a1a1a"/><rect x="1" y="11" width="5" height="5" fill="#1a1a1a"/><rect x="7" y="8" width="5" height="5" fill="#1a1a1a"/><rect x="7" y="14" width="5" height="5" fill="#1a1a1a"/><rect x="7.5" y="2.5" width="4" height="4" fill="none" stroke="#444"/><rect x="13.5" y="5.5" width="4" height="4" fill="none" stroke="#444"/><rect x="13.5" y="11.5" width="4" height="4" fill="none" stroke="#444"/></svg><svg style="left:221px;top:334px" width="20" height="21" viewBox="0 0 20 21"><path d="M3 3 H17 L10 18 Z" fill="none" stroke="#2a2a2a" stroke-width="4" stroke-linejoin="round"/><path d="M3 3 H17 L10 18 Z" fill="none" stroke="#3fd0a8" stroke-width="2" stroke-linejoin="round"/><rect x="0.5" y="0.5" width="5" height="5" fill="#3fd0a8" stroke="#2a2a2a"/><rect x="14.5" y="0.5" width="5" height="5" fill="#3fd0a8" stroke="#2a2a2a"/><rect x="7.5" y="15.5" width="5" height="5" fill="#3fd0a8" stroke="#2a2a2a"/><rect x="2" y="2" width="2" height="2" fill="#2a2a2a"/><rect x="16" y="2" width="2" height="2" fill="#2a2a2a"/><rect x="9" y="17" width="2" height="2" fill="#2a2a2a"/></svg><svg style="left:302px;top:338px" width="18" height="14" viewBox="0 0 18 14"><path d="M0.5 7 Q9 -3 17.5 7 Q9 17 0.5 7 Z" fill="#1a1a1a"/><circle cx="9" cy="7" r="3.6" fill="#a8a8a8"/><circle cx="9" cy="7" r="1.8" fill="#1a1a1a"/></svg><div class="a" style="left:36px;top:332px;width:1px;height:25px;border-left:1px dashed #5a5a5a"></div><div class="a" style="left:0px;top:357px;width:331px;height:25px;background:#a1a1a1"></div><svg style="left:59px;top:365px" width="8" height="10" viewBox="0 0 8 10"><path d="M1 1.5 L8 5 L1 8.5 Z" fill="#111"/></svg><svg style="left:77px;top:360px" width="20" height="20" viewBox="0 0 20 20"><path d="M2 3.5 Q2 2 3.5 2 H16.5 Q18 2 17.4 3.5 L11 18 Q10 19.5 9 18 L2.6 3.5 Z" fill="#e9a062" stroke="#333" stroke-width="1.6" stroke-linejoin="round"/><path d="M7.6 5.8 H12.4 L10 10.5 Z" fill="none" stroke="#333" stroke-width="1.3" stroke-linejoin="round"/></svg><div class="t" style="left:105px;top:363px;color:#111">00372:6:0</div><svg style="left:197px;top:361px" width="19" height="20" viewBox="0 0 19 20"><rect x="1" y="5" width="5" height="5" fill="#1a1a1a"/><rect x="1" y="11" width="5" height="5" fill="#1a1a1a"/><rect x="7" y="8" width="5" height="5" fill="#1a1a1a"/><rect x="7" y="14" width="5" height="5" fill="#1a1a1a"/><rect x="7.5" y="2.5" width="4" height="4" fill="none" stroke="#444"/><rect x="13.5" y="5.5" width="4" height="4" fill="none" stroke="#444"/><rect x="13.5" y="11.5" width="4" height="4" fill="none" stroke="#444"/></svg><svg style="left:221px;top:359px" width="20" height="21" viewBox="0 0 20 21"><path d="M3 3 H17 L10 18 Z" fill="none" stroke="#2a2a2a" stroke-width="4" stroke-linejoin="round"/><path d="M3 3 H17 L10 18 Z" fill="none" stroke="#3fd0a8" stroke-width="2" stroke-linejoin="round"/><rect x="0.5" y="0.5" width="5" height="5" fill="#3fd0a8" stroke="#2a2a2a"/><rect x="14.5" y="0.5" width="5" height="5" fill="#3fd0a8" stroke="#2a2a2a"/><rect x="7.5" y="15.5" width="5" height="5" fill="#3fd0a8" stroke="#2a2a2a"/><rect x="2" y="2" width="2" height="2" fill="#2a2a2a"/><rect x="16" y="2" width="2" height="2" fill="#2a2a2a"/><rect x="9" y="17" width="2" height="2" fill="#2a2a2a"/></svg><svg style="left:302px;top:363px" width="18" height="14" viewBox="0 0 18 14"><path d="M0.5 7 Q9 -3 17.5 7 Q9 17 0.5 7 Z" fill="#1a1a1a"/><circle cx="9" cy="7" r="3.6" fill="#a8a8a8"/><circle cx="9" cy="7" r="1.8" fill="#1a1a1a"/></svg><div class="a" style="left:36px;top:357px;width:1px;height:25px;border-left:1px dashed #5a5a5a"></div><div class="a" style="left:0px;top:382px;width:331px;height:25px;background:#9b9b9b"></div><svg style="left:59px;top:390px" width="8" height="10" viewBox="0 0 8 10"><path d="M1 1.5 L8 5 L1 8.5 Z" fill="#111"/></svg><svg style="left:77px;top:385px" width="20" height="20" viewBox="0 0 20 20"><path d="M2 3.5 Q2 2 3.5 2 H16.5 Q18 2 17.4 3.5 L11 18 Q10 19.5 9 18 L2.6 3.5 Z" fill="#e9a062" stroke="#333" stroke-width="1.6" stroke-linejoin="round"/><path d="M7.6 5.8 H12.4 L10 10.5 Z" fill="none" stroke="#333" stroke-width="1.3" stroke-linejoin="round"/></svg><div class="t" style="left:105px;top:388px;color:#111">00372:7:0</div><svg style="left:197px;top:386px" width="19" height="20" viewBox="0 0 19 20"><rect x="1" y="5" width="5" height="5" fill="#1a1a1a"/><rect x="1" y="11" width="5" height="5" fill="#1a1a1a"/><rect x="7" y="8" width="5" height="5" fill="#1a1a1a"/><rect x="7" y="14" width="5" height="5" fill="#1a1a1a"/><rect x="7.5" y="2.5" width="4" height="4" fill="none" stroke="#444"/><rect x="13.5" y="5.5" width="4" height="4" fill="none" stroke="#444"/><rect x="13.5" y="11.5" width="4" height="4" fill="none" stroke="#444"/></svg><svg style="left:221px;top:384px" width="20" height="21" viewBox="0 0 20 21"><path d="M3 3 H17 L10 18 Z" fill="none" stroke="#2a2a2a" stroke-width="4" stroke-linejoin="round"/><path d="M3 3 H17 L10 18 Z" fill="none" stroke="#3fd0a8" stroke-width="2" stroke-linejoin="round"/><rect x="0.5" y="0.5" width="5" height="5" fill="#3fd0a8" stroke="#2a2a2a"/><rect x="14.5" y="0.5" width="5" height="5" fill="#3fd0a8" stroke="#2a2a2a"/><rect x="7.5" y="15.5" width="5" height="5" fill="#3fd0a8" stroke="#2a2a2a"/><rect x="2" y="2" width="2" height="2" fill="#2a2a2a"/><rect x="16" y="2" width="2" height="2" fill="#2a2a2a"/><rect x="9" y="17" width="2" height="2" fill="#2a2a2a"/></svg><svg style="left:302px;top:388px" width="18" height="14" viewBox="0 0 18 14"><path d="M0.5 7 Q9 -3 17.5 7 Q9 17 0.5 7 Z" fill="#1a1a1a"/><circle cx="9" cy="7" r="3.6" fill="#a8a8a8"/><circle cx="9" cy="7" r="1.8" fill="#1a1a1a"/></svg><div class="a" style="left:36px;top:382px;width:1px;height:25px;border-left:1px dashed #5a5a5a"></div><div class="a" style="left:0px;top:407px;width:331px;height:25px;background:#a1a1a1"></div><svg style="left:59px;top:415px" width="8" height="10" viewBox="0 0 8 10"><path d="M1 1.5 L8 5 L1 8.5 Z" fill="#111"/></svg><svg style="left:77px;top:410px" width="20" height="20" viewBox="0 0 20 20"><path d="M2 3.5 Q2 2 3.5 2 H16.5 Q18 2 17.4 3.5 L11 18 Q10 19.5 9 18 L2.6 3.5 Z" fill="#e9a062" stroke="#333" stroke-width="1.6" stroke-linejoin="round"/><path d="M7.6 5.8 H12.4 L10 10.5 Z" fill="none" stroke="#333" stroke-width="1.3" stroke-linejoin="round"/></svg><div class="t" style="left:105px;top:413px;color:#111">00372:8:0</div><svg style="left:197px;top:411px" width="19" height="20" viewBox="0 0 19 20"><rect x="1" y="5" width="5" height="5" fill="#1a1a1a"/><rect x="1" y="11" width="5" height="5" fill="#1a1a1a"/><rect x="7" y="8" width="5" height="5" fill="#1a1a1a"/><rect x="7" y="14" width="5" height="5" fill="#1a1a1a"/><rect x="7.5" y="2.5" width="4" height="4" fill="none" stroke="#444"/><rect x="13.5" y="5.5" width="4" height="4" fill="none" stroke="#444"/><rect x="13.5" y="11.5" width="4" height="4" fill="none" stroke="#444"/></svg><svg style="left:221px;top:409px" width="20" height="21" viewBox="0 0 20 21"><path d="M3 3 H17 L10 18 Z" fill="none" stroke="#2a2a2a" stroke-width="4" stroke-linejoin="round"/><path d="M3 3 H17 L10 18 Z" fill="none" stroke="#3fd0a8" stroke-width="2" stroke-linejoin="round"/><rect x="0.5" y="0.5" width="5" height="5" fill="#3fd0a8" stroke="#2a2a2a"/><rect x="14.5" y="0.5" width="5" height="5" fill="#3fd0a8" stroke="#2a2a2a"/><rect x="7.5" y="15.5" width="5" height="5" fill="#3fd0a8" stroke="#2a2a2a"/><rect x="2" y="2" width="2" height="2" fill="#2a2a2a"/><rect x="16" y="2" width="2" height="2" fill="#2a2a2a"/><rect x="9" y="17" width="2" height="2" fill="#2a2a2a"/></svg><svg style="left:302px;top:413px" width="18" height="14" viewBox="0 0 18 14"><path d="M0.5 7 Q9 -3 17.5 7 Q9 17 0.5 7 Z" fill="#1a1a1a"/><circle cx="9" cy="7" r="3.6" fill="#a8a8a8"/><circle cx="9" cy="7" r="1.8" fill="#1a1a1a"/></svg><div class="a" style="left:36px;top:407px;width:1px;height:25px;border-left:1px dashed #5a5a5a"></div><div class="a" style="left:0px;top:432px;width:331px;height:25px;background:#9b9b9b"></div><svg style="left:59px;top:440px" width="8" height="10" viewBox="0 0 8 10"><path d="M1 1.5 L8 5 L1 8.5 Z" fill="#111"/></svg><svg style="left:77px;top:435px" width="20" height="20" viewBox="0 0 20 20"><path d="M2 3.5 Q2 2 3.5 2 H16.5 Q18 2 17.4 3.5 L11 18 Q10 19.5 9 18 L2.6 3.5 Z" fill="#e9a062" stroke="#333" stroke-width="1.6" stroke-linejoin="round"/><path d="M7.6 5.8 H12.4 L10 10.5 Z" fill="none" stroke="#333" stroke-width="1.3" stroke-linejoin="round"/></svg><div class="t" style="left:105px;top:438px;color:#111">00372:9:0</div><svg style="left:197px;top:436px" width="19" height="20" viewBox="0 0 19 20"><rect x="1" y="5" width="5" height="5" fill="#1a1a1a"/><rect x="1" y="11" width="5" height="5" fill="#1a1a1a"/><rect x="7" y="8" width="5" height="5" fill="#1a1a1a"/><rect x="7" y="14" width="5" height="5" fill="#1a1a1a"/><rect x="7.5" y="2.5" width="4" height="4" fill="none" stroke="#444"/><rect x="13.5" y="5.5" width="4" height="4" fill="none" stroke="#444"/><rect x="13.5" y="11.5" width="4" height="4" fill="none" stroke="#444"/></svg><svg style="left:221px;top:434px" width="20" height="21" viewBox="0 0 20 21"><path d="M3 3 H17 L10 18 Z" fill="none" stroke="#2a2a2a" stroke-width="4" stroke-linejoin="round"/><path d="M3 3 H17 L10 18 Z" fill="none" stroke="#3fd0a8" stroke-width="2" stroke-linejoin="round"/><rect x="0.5" y="0.5" width="5" height="5" fill="#3fd0a8" stroke="#2a2a2a"/><rect x="14.5" y="0.5" width="5" height="5" fill="#3fd0a8" stroke="#2a2a2a"/><rect x="7.5" y="15.5" width="5" height="5" fill="#3fd0a8" stroke="#2a2a2a"/><rect x="2" y="2" width="2" height="2" fill="#2a2a2a"/><rect x="16" y="2" width="2" height="2" fill="#2a2a2a"/><rect x="9" y="17" width="2" height="2" fill="#2a2a2a"/></svg><svg style="left:302px;top:438px" width="18" height="14" viewBox="0 0 18 14"><path d="M0.5 7 Q9 -3 17.5 7 Q9 17 0.5 7 Z" fill="#1a1a1a"/><circle cx="9" cy="7" r="3.6" fill="#a8a8a8"/><circle cx="9" cy="7" r="1.8" fill="#1a1a1a"/></svg><div class="a" style="left:36px;top:432px;width:1px;height:25px;border-left:1px dashed #5a5a5a"></div><div class="a" style="left:0px;top:457px;width:331px;height:25px;background:#a1a1a1"></div><svg style="left:59px;top:465px" width="8" height="10" viewBox="0 0 8 10"><path d="M1 1.5 L8 5 L1 8.5 Z" fill="#111"/></svg><svg style="left:77px;top:460px" width="20" height="20" viewBox="0 0 20 20"><path d="M2 3.5 Q2 2 3.5 2 H16.5 Q18 2 17.4 3.5 L11 18 Q10 19.5 9 18 L2.6 3.5 Z" fill="#e9a062" stroke="#333" stroke-width="1.6" stroke-linejoin="round"/><path d="M7.6 5.8 H12.4 L10 10.5 Z" fill="none" stroke="#333" stroke-width="1.3" stroke-linejoin="round"/></svg><div class="t" style="left:105px;top:463px;color:#111">00372:10:0</div><svg style="left:205px;top:461px" width="19" height="20" viewBox="0 0 19 20"><rect x="1" y="5" width="5" height="5" fill="#1a1a1a"/><rect x="1" y="11" width="5" height="5" fill="#1a1a1a"/><rect x="7" y="8" width="5" height="5" fill="#1a1a1a"/><rect x="7" y="14" width="5" height="5" fill="#1a1a1a"/><rect x="7.5" y="2.5" width="4" height="4" fill="none" stroke="#444"/><rect x="13.5" y="5.5" width="4" height="4" fill="none" stroke="#444"/><rect x="13.5" y="11.5" width="4" height="4" fill="none" stroke="#444"/></svg><svg style="left:229px;top:459px" width="20" height="21" viewBox="0 0 20 21"><path d="M3 3 H17 L10 18 Z" fill="none" stroke="#2a2a2a" stroke-width="4" stroke-linejoin="round"/><path d="M3 3 H17 L10 18 Z" fill="none" stroke="#3fd0a8" stroke-width="2" stroke-linejoin="round"/><rect x="0.5" y="0.5" width="5" height="5" fill="#3fd0a8" stroke="#2a2a2a"/><rect x="14.5" y="0.5" width="5" height="5" fill="#3fd0a8" stroke="#2a2a2a"/><rect x="7.5" y="15.5" width="5" height="5" fill="#3fd0a8" stroke="#2a2a2a"/><rect x="2" y="2" width="2" height="2" fill="#2a2a2a"/><rect x="16" y="2" width="2" height="2" fill="#2a2a2a"/><rect x="9" y="17" width="2" height="2" fill="#2a2a2a"/></svg><svg style="left:302px;top:463px" width="18" height="14" viewBox="0 0 18 14"><path d="M0.5 7 Q9 -3 17.5 7 Q9 17 0.5 7 Z" fill="#1a1a1a"/><circle cx="9" cy="7" r="3.6" fill="#a8a8a8"/><circle cx="9" cy="7" r="1.8" fill="#1a1a1a"/></svg><div class="a" style="left:36px;top:457px;width:1px;height:25px;border-left:1px dashed #5a5a5a"></div><div class="a" style="left:0px;top:482px;width:331px;height:25px;background:#9b9b9b"></div><svg style="left:59px;top:490px" width="8" height="10" viewBox="0 0 8 10"><path d="M1 1.5 L8 5 L1 8.5 Z" fill="#111"/></svg><svg style="left:77px;top:485px" width="20" height="20" viewBox="0 0 20 20"><path d="M2 3.5 Q2 2 3.5 2 H16.5 Q18 2 17.4 3.5 L11 18 Q10 19.5 9 18 L2.6 3.5 Z" fill="#e9a062" stroke="#333" stroke-width="1.6" stroke-linejoin="round"/><path d="M7.6 5.8 H12.4 L10 10.5 Z" fill="none" stroke="#333" stroke-width="1.3" stroke-linejoin="round"/></svg><div class="t" style="left:105px;top:488px;color:#111">00372:11:0</div><svg style="left:205px;top:486px" width="19" height="20" viewBox="0 0 19 20"><rect x="1" y="5" width="5" height="5" fill="#1a1a1a"/><rect x="1" y="11" width="5" height="5" fill="#1a1a1a"/><rect x="7" y="8" width="5" height="5" fill="#1a1a1a"/><rect x="7" y="14" width="5" height="5" fill="#1a1a1a"/><rect x="7.5" y="2.5" width="4" height="4" fill="none" stroke="#444"/><rect x="13.5" y="5.5" width="4" height="4" fill="none" stroke="#444"/><rect x="13.5" y="11.5" width="4" height="4" fill="none" stroke="#444"/></svg><svg style="left:229px;top:484px" width="20" height="21" viewBox="0 0 20 21"><path d="M3 3 H17 L10 18 Z" fill="none" stroke="#2a2a2a" stroke-width="4" stroke-linejoin="round"/><path d="M3 3 H17 L10 18 Z" fill="none" stroke="#3fd0a8" stroke-width="2" stroke-linejoin="round"/><rect x="0.5" y="0.5" width="5" height="5" fill="#3fd0a8" stroke="#2a2a2a"/><rect x="14.5" y="0.5" width="5" height="5" fill="#3fd0a8" stroke="#2a2a2a"/><rect x="7.5" y="15.5" width="5" height="5" fill="#3fd0a8" stroke="#2a2a2a"/><rect x="2" y="2" width="2" height="2" fill="#2a2a2a"/><rect x="16" y="2" width="2" height="2" fill="#2a2a2a"/><rect x="9" y="17" width="2" height="2" fill="#2a2a2a"/></svg><svg style="left:302px;top:488px" width="18" height="14" viewBox="0 0 18 14"><path d="M0.5 7 Q9 -3 17.5 7 Q9 17 0.5 7 Z" fill="#1a1a1a"/><circle cx="9" cy="7" r="3.6" fill="#a8a8a8"/><circle cx="9" cy="7" r="1.8" fill="#1a1a1a"/></svg><div class="a" style="left:36px;top:482px;width:1px;height:25px;border-left:1px dashed #5a5a5a"></div><div class="a" style="left:0px;top:507px;width:331px;height:25px;background:#7f939f"></div><svg style="left:59px;top:515px" width="8" height="10" viewBox="0 0 8 10"><path d="M1 1.5 L8 5 L1 8.5 Z" fill="#111"/></svg><svg style="left:77px;top:510px" width="20" height="20" viewBox="0 0 20 20"><path d="M2 3.5 Q2 2 3.5 2 H16.5 Q18 2 17.4 3.5 L11 18 Q10 19.5 9 18 L2.6 3.5 Z" fill="#e9a062" stroke="#333" stroke-width="1.6" stroke-linejoin="round"/><path d="M7.6 5.8 H12.4 L10 10.5 Z" fill="none" stroke="#333" stroke-width="1.3" stroke-linejoin="round"/></svg><div class="t" style="left:105px;top:513px;color:#f3dcb0">00372:12:0</div><svg style="left:205px;top:511px" width="19" height="20" viewBox="0 0 19 20"><rect x="1" y="5" width="5" height="5" fill="#1a1a1a"/><rect x="1" y="11" width="5" height="5" fill="#1a1a1a"/><rect x="7" y="8" width="5" height="5" fill="#1a1a1a"/><rect x="7" y="14" width="5" height="5" fill="#1a1a1a"/><rect x="7.5" y="2.5" width="4" height="4" fill="none" stroke="#444"/><rect x="13.5" y="5.5" width="4" height="4" fill="none" stroke="#444"/><rect x="13.5" y="11.5" width="4" height="4" fill="none" stroke="#444"/></svg><svg style="left:229px;top:509px" width="20" height="21" viewBox="0 0 20 21"><path d="M3 3 H17 L10 18 Z" fill="none" stroke="#2a2a2a" stroke-width="4" stroke-linejoin="round"/><path d="M3 3 H17 L10 18 Z" fill="none" stroke="#3fd0a8" stroke-width="2" stroke-linejoin="round"/><rect x="0.5" y="0.5" width="5" height="5" fill="#3fd0a8" stroke="#2a2a2a"/><rect x="14.5" y="0.5" width="5" height="5" fill="#3fd0a8" stroke="#2a2a2a"/><rect x="7.5" y="15.5" width="5" height="5" fill="#3fd0a8" stroke="#2a2a2a"/><rect x="2" y="2" width="2" height="2" fill="#2a2a2a"/><rect x="16" y="2" width="2" height="2" fill="#2a2a2a"/><rect x="9" y="17" width="2" height="2" fill="#2a2a2a"/></svg><svg style="left:302px;top:513px" width="18" height="14" viewBox="0 0 18 14"><path d="M0.5 7 Q9 -3 17.5 7 Q9 17 0.5 7 Z" fill="#1a1a1a"/><circle cx="9" cy="7" r="3.6" fill="#a8a8a8"/><circle cx="9" cy="7" r="1.8" fill="#1a1a1a"/></svg><div class="a" style="left:36px;top:507px;width:1px;height:25px;border-left:1px dashed #5a5a5a"></div><div class="a" style="left:0px;top:532px;width:331px;height:25px;background:#7b8f9b"></div><svg style="left:59px;top:540px" width="8" height="10" viewBox="0 0 8 10"><path d="M1 1.5 L8 5 L1 8.5 Z" fill="#111"/></svg><svg style="left:77px;top:535px" width="20" height="20" viewBox="0 0 20 20"><path d="M2 3.5 Q2 2 3.5 2 H16.5 Q18 2 17.4 3.5 L11 18 Q10 19.5 9 18 L2.6 3.5 Z" fill="#e9a062" stroke="#333" stroke-width="1.6" stroke-linejoin="round"/><path d="M7.6 5.8 H12.4 L10 10.5 Z" fill="none" stroke="#333" stroke-width="1.3" stroke-linejoin="round"/></svg><div class="t" style="left:105px;top:538px;color:#f3dcb0">00372:13:0</div><svg style="left:205px;top:536px" width="19" height="20" viewBox="0 0 19 20"><rect x="1" y="5" width="5" height="5" fill="#1a1a1a"/><rect x="1" y="11" width="5" height="5" fill="#1a1a1a"/><rect x="7" y="8" width="5" height="5" fill="#1a1a1a"/><rect x="7" y="14" width="5" height="5" fill="#1a1a1a"/><rect x="7.5" y="2.5" width="4" height="4" fill="none" stroke="#444"/><rect x="13.5" y="5.5" width="4" height="4" fill="none" stroke="#444"/><rect x="13.5" y="11.5" width="4" height="4" fill="none" stroke="#444"/></svg><svg style="left:229px;top:534px" width="20" height="21" viewBox="0 0 20 21"><path d="M3 3 H17 L10 18 Z" fill="none" stroke="#2a2a2a" stroke-width="4" stroke-linejoin="round"/><path d="M3 3 H17 L10 18 Z" fill="none" stroke="#3fd0a8" stroke-width="2" stroke-linejoin="round"/><rect x="0.5" y="0.5" width="5" height="5" fill="#3fd0a8" stroke="#2a2a2a"/><rect x="14.5" y="0.5" width="5" height="5" fill="#3fd0a8" stroke="#2a2a2a"/><rect x="7.5" y="15.5" width="5" height="5" fill="#3fd0a8" stroke="#2a2a2a"/><rect x="2" y="2" width="2" height="2" fill="#2a2a2a"/><rect x="16" y="2" width="2" height="2" fill="#2a2a2a"/><rect x="9" y="17" width="2" height="2" fill="#2a2a2a"/></svg><svg style="left:302px;top:538px" width="18" height="14" viewBox="0 0 18 14"><path d="M0.5 7 Q9 -3 17.5 7 Q9 17 0.5 7 Z" fill="#1a1a1a"/><circle cx="9" cy="7" r="3.6" fill="#a8a8a8"/><circle cx="9" cy="7" r="1.8" fill="#1a1a1a"/></svg><div class="a" style="left:36px;top:532px;width:1px;height:25px;border-left:1px dashed #5a5a5a"></div><div class="a" style="left:0px;top:557px;width:331px;height:25px;background:#a1a1a1"></div><svg style="left:59px;top:565px" width="8" height="10" viewBox="0 0 8 10"><path d="M1 1.5 L8 5 L1 8.5 Z" fill="#111"/></svg><svg style="left:77px;top:560px" width="20" height="20" viewBox="0 0 20 20"><path d="M2 3.5 Q2 2 3.5 2 H16.5 Q18 2 17.4 3.5 L11 18 Q10 19.5 9 18 L2.6 3.5 Z" fill="#e9a062" stroke="#333" stroke-width="1.6" stroke-linejoin="round"/><path d="M7.6 5.8 H12.4 L10 10.5 Z" fill="none" stroke="#333" stroke-width="1.3" stroke-linejoin="round"/></svg><div class="t" style="left:105px;top:563px;color:#111">00372:14:0</div><svg style="left:205px;top:561px" width="19" height="20" viewBox="0 0 19 20"><rect x="1" y="5" width="5" height="5" fill="#1a1a1a"/><rect x="1" y="11" width="5" height="5" fill="#1a1a1a"/><rect x="7" y="8" width="5" height="5" fill="#1a1a1a"/><rect x="7" y="14" width="5" height="5" fill="#1a1a1a"/><rect x="7.5" y="2.5" width="4" height="4" fill="none" stroke="#444"/><rect x="13.5" y="5.5" width="4" height="4" fill="none" stroke="#444"/><rect x="13.5" y="11.5" width="4" height="4" fill="none" stroke="#444"/></svg><svg style="left:229px;top:559px" width="20" height="21" viewBox="0 0 20 21"><path d="M3 3 H17 L10 18 Z" fill="none" stroke="#2a2a2a" stroke-width="4" stroke-linejoin="round"/><path d="M3 3 H17 L10 18 Z" fill="none" stroke="#3fd0a8" stroke-width="2" stroke-linejoin="round"/><rect x="0.5" y="0.5" width="5" height="5" fill="#3fd0a8" stroke="#2a2a2a"/><rect x="14.5" y="0.5" width="5" height="5" fill="#3fd0a8" stroke="#2a2a2a"/><rect x="7.5" y="15.5" width="5" height="5" fill="#3fd0a8" stroke="#2a2a2a"/><rect x="2" y="2" width="2" height="2" fill="#2a2a2a"/><rect x="16" y="2" width="2" height="2" fill="#2a2a2a"/><rect x="9" y="17" width="2" height="2" fill="#2a2a2a"/></svg><svg style="left:302px;top:563px" width="18" height="14" viewBox="0 0 18 14"><path d="M0.5 7 Q9 -3 17.5 7 Q9 17 0.5 7 Z" fill="#1a1a1a"/><circle cx="9" cy="7" r="3.6" fill="#a8a8a8"/><circle cx="9" cy="7" r="1.8" fill="#1a1a1a"/></svg><div class="a" style="left:36px;top:557px;width:1px;height:25px;border-left:1px dashed #5a5a5a"></div><div class="a" style="left:0px;top:582px;width:331px;height:25px;background:#91a8b6"></div><div class="a" style="left:76px;top:583px;width:24px;height:23px;background:#6f8593;border-radius:5px;border:1px solid #5e7280"></div><svg style="left:59px;top:590px" width="8" height="10" viewBox="0 0 8 10"><path d="M1 1.5 L8 5 L1 8.5 Z" fill="#111"/></svg><svg style="left:77px;top:585px" width="20" height="20" viewBox="0 0 20 20"><path d="M2 3.5 Q2 2 3.5 2 H16.5 Q18 2 17.4 3.5 L11 18 Q10 19.5 9 18 L2.6 3.5 Z" fill="#e9a062" stroke="#333" stroke-width="1.6" stroke-linejoin="round"/><path d="M7.6 5.8 H12.4 L10 10.5 Z" fill="none" stroke="#333" stroke-width="1.3" stroke-linejoin="round"/></svg><div class="t" style="left:105px;top:588px;color:#ffffff">00372:15:0</div><svg style="left:205px;top:586px" width="19" height="20" viewBox="0 0 19 20"><rect x="1" y="5" width="5" height="5" fill="#1a1a1a"/><rect x="1" y="11" width="5" height="5" fill="#1a1a1a"/><rect x="7" y="8" width="5" height="5" fill="#1a1a1a"/><rect x="7" y="14" width="5" height="5" fill="#1a1a1a"/><rect x="7.5" y="2.5" width="4" height="4" fill="none" stroke="#444"/><rect x="13.5" y="5.5" width="4" height="4" fill="none" stroke="#444"/><rect x="13.5" y="11.5" width="4" height="4" fill="none" stroke="#444"/></svg><svg style="left:229px;top:584px" width="20" height="21" viewBox="0 0 20 21"><path d="M3 3 H17 L10 18 Z" fill="none" stroke="#2a2a2a" stroke-width="4" stroke-linejoin="round"/><path d="M3 3 H17 L10 18 Z" fill="none" stroke="#3fd0a8" stroke-width="2" stroke-linejoin="round"/><rect x="0.5" y="0.5" width="5" height="5" fill="#3fd0a8" stroke="#2a2a2a"/><rect x="14.5" y="0.5" width="5" height="5" fill="#3fd0a8" stroke="#2a2a2a"/><rect x="7.5" y="15.5" width="5" height="5" fill="#3fd0a8" stroke="#2a2a2a"/><rect x="2" y="2" width="2" height="2" fill="#2a2a2a"/><rect x="16" y="2" width="2" height="2" fill="#2a2a2a"/><rect x="9" y="17" width="2" height="2" fill="#2a2a2a"/></svg><svg style="left:302px;top:588px" width="18" height="14" viewBox="0 0 18 14"><path d="M0.5 7 Q9 -3 17.5 7 Q9 17 0.5 7 Z" fill="#1a1a1a"/><circle cx="9" cy="7" r="3.6" fill="#a8a8a8"/><circle cx="9" cy="7" r="1.8" fill="#1a1a1a"/></svg><div class="a" style="left:36px;top:582px;width:1px;height:25px;border-left:1px dashed #5a5a5a"></div><div class="a" style="left:0px;top:632px;width:331px;height:4px;background:#999999"></div></div><div class="a" style="left:1588px;top:697px;width:331px;height:357px;background:#b4b4b4;border-radius:7px;overflow:hidden"><div class="a" style="left:0px;top:0px;width:331px;height:31px;background:#aaaaaa"></div><div class="a" style="left:10px;top:3px;width:40px;height:25px;background:#3d3d3d;border-radius:5px"></div><svg style="left:16px;top:6px" width="20" height="19" viewBox="0 0 20 19"><rect x="1" y="1" width="17" height="7" rx="3.5" fill="#e6e6e6"/><rect x="9" y="2" width="8" height="5" rx="2" fill="#3d3d3d"/><rect x="1" y="10" width="17" height="7" rx="3.5" fill="#e6e6e6"/><rect x="12" y="11" width="5" height="5" rx="2" fill="#3d3d3d"/></svg><svg style="left:36px;top:13px" width="10" height="6" viewBox="0 0 10 6"><path d="M1 1 L5 5 L9 1" stroke="#e6e6e6" stroke-width="1.5" fill="none"/></svg><div class="a" style="left:88px;top:4px;width:142px;height:24px;background:#252525;border-radius:5px"></div><svg style="left:94px;top:6px" width="18" height="18" viewBox="0 0 18 18"><circle cx="11" cy="7" r="5" fill="none" stroke="#e6e6e6" stroke-width="1.4"/><path d="M7.5 10.5 L2 16" stroke="#e6e6e6" stroke-width="1.6"/></svg><div class="a" style="left:0px;top:31px;width:35px;height:326px;background:#666666"></div><div class="a" style="left:1px;top:41px;width:34px;height:34px;background:#8a8a8a;border-radius:6px 0 0 6px"></div><div class="a" style="left:1px;top:85px;width:34px;height:104px;background:#8a8a8a;border-radius:6px 0 0 6px"></div><div class="a" style="left:1px;top:191px;width:34px;height:33px;background:#b4b4b4;border-radius:6px 0 0 6px"></div><div class="a" style="left:1px;top:224px;width:34px;height:35px;background:#8a8a8a;border-radius:6px 0 0 6px"></div><div class="a" style="left:1px;top:269px;width:34px;height:100px;background:#8a8a8a;border-radius:6px 0 0 6px"></div><svg style="left:9px;top:47px" width="20" height="20" viewBox="0 0 20 20"><rect x="2" y="9" width="5" height="9" rx="1" fill="#e6e6e6" stroke="#1e1e1e" stroke-width="1.2"/><path d="M4.5 1 V9" stroke="#1e1e1e" stroke-width="2"/><path d="M12 18 V9 C9 8 9 3 11 1 V5 H15 V1 C17 3 17 8 14 9 V18 Z" fill="#e6e6e6" stroke="#1e1e1e" stroke-width="1.2"/></svg><svg style="left:9px;top:90px" width="20" height="20" viewBox="0 0 20 20"><rect x="2" y="5" width="16" height="13" rx="1.5" fill="#e6e6e6" stroke="#1e1e1e" stroke-width="1.3"/><rect x="5" y="2" width="5" height="3" fill="#1e1e1e"/><rect x="12" y="2" width="4" height="3" fill="#1e1e1e"/><path d="M4 9 H13 M4 12 H13 M4 15 H13" stroke="#1e1e1e" stroke-width="1.2"/><circle cx="15.5" cy="10" r="0.8" fill="#1e1e1e"/><circle cx="15.5" cy="14" r="0.8" fill="#1e1e1e"/></svg><svg style="left:9px;top:126px" width="20" height="20" viewBox="0 0 20 20"><rect x="1.5" y="2" width="17" height="8" rx="1.5" fill="#e6e6e6" stroke="#1e1e1e" stroke-width="1.3"/><rect x="4" y="7" width="12" height="11" fill="#e6e6e6" stroke="#1e1e1e" stroke-width="1.3"/><path d="M7 15 L10 11 L13 15 Z" fill="#1e1e1e"/></svg><svg style="left:9px;top:160px" width="20" height="20" viewBox="0 0 20 20"><rect x="6" y="1.5" width="12" height="11" fill="#e6e6e6" stroke="#1e1e1e" stroke-width="1.3"/><path d="M4 4 V15 H15 M2 6 V18 H13" fill="none" stroke="#1e1e1e" stroke-width="1.2"/><path d="M8 11 L11 7 L13 9 L16 4 V11 Z" fill="#1e1e1e"/></svg><svg style="left:8px;top:196px" width="21" height="21" viewBox="0 0 21 21"><path d="M6 2 L1 12 A5 5 0 0 0 10 14 Z" fill="#e6e6e6" stroke="#1e1e1e" stroke-width="1.2"/><circle cx="15" cy="6" r="3.5" fill="#e6e6e6" stroke="#1e1e1e" stroke-width="1.2"/><circle cx="13" cy="14" r="5" fill="#e6e6e6" stroke="#1e1e1e" stroke-width="1.3"/><circle cx="13" cy="14" r="2.5" fill="none" stroke="#1e1e1e" stroke-width="1.2"/></svg><svg style="left:8px;top:231px" width="22" height="22" viewBox="0 0 22 22"><circle cx="11" cy="11" r="9" fill="#d45a63" stroke="#1e1e1e" stroke-width="1.3"/><path d="M4 8 C8 6 8 12 12 10 C15 9 13 4 17 5 M8 19 C9 15 13 16 14 13 C16 11 19 14 20 12" stroke="#1e1e1e" stroke-width="1.3" fill="none"/><path d="M2 11 A9 9 0 0 1 20 11" stroke="#1e1e1e" stroke-width="1" fill="none"/></svg><svg style="left:9px;top:275px" width="20" height="20" viewBox="0 0 20 20"><rect x="3" y="3" width="14" height="14" fill="#e9995a" stroke="#1e1e1e" stroke-width="1.3"/><path d="M1 5 V1 H5 M15 1 H19 V5 M19 15 V19 H15 M5 19 H1 V15" stroke="#1e1e1e" stroke-width="1.6" fill="none"/></svg><svg style="left:9px;top:310px" width="20" height="20" viewBox="0 0 20 20"><path d="M3 17 L11 9 A5 5 0 0 1 17 2 L14 5 L15.5 7 L18 4.5 A5 5 0 0 1 12 10 L5 18 Z" fill="#5a9ae0" stroke="#1e1e1e" stroke-width="1.3" stroke-linejoin="round"/></svg><svg style="left:9px;top:342px" width="20" height="20" viewBox="0 0 20 20"><circle cx="4" cy="8" r="3" fill="#5a9ae0" stroke="#1e1e1e"/><rect x="6" y="6" width="12" height="4" rx="2" fill="#5a9ae0" stroke="#1e1e1e"/><path d="M4 11 L2 18 M4 11 L7 18" stroke="#1e1e1e" stroke-width="1.5"/></svg><svg style="left:47px;top:45px" width="19" height="19" viewBox="0 0 19 19"><path d="M5 2 L1 11 A4 4 0 0 0 8 12 Z" fill="#1e1e1e"/><circle cx="14" cy="4" r="2.5" fill="#1e1e1e"/><circle cx="12" cy="13" r="4.5" fill="#b4b4b4" stroke="#1e1e1e" stroke-width="1.3"/><circle cx="12" cy="13" r="2" fill="none" stroke="#1e1e1e" stroke-width="1"/></svg><div class="t" style="left:78px;top:46px;color:#111">Scene</div><svg style="left:300px;top:44px" width="19" height="19" viewBox="0 0 19 19"><path d="M2 18 L8 12 M6 8 L12 14 M8 5 L15 12 M10 3 L17 10 M13 1 L18 6 L14 9 M9 4 L13 1" stroke="#555" stroke-width="1.2" fill="none"/></svg><svg style="left:46px;top:87px" width="9" height="8" viewBox="0 0 9 8"><path d="M0 0 H9 L4.5 8 Z" fill="#555"/></svg><div class="t" style="left:62px;top:84px;color:#111;font-size:15px">Scene</div><svg style="left:308px;top:88px" width="14" height="6" viewBox="0 0 14 6"><g fill="#eaeaea"><rect x="0" y="0" width="2" height="2"/><rect x="4" y="0" width="2" height="2"/><rect x="8" y="0" width="2" height="2"/><rect x="12" y="0" width="2" height="2"/><rect x="0" y="4" width="2" height="2"/><rect x="4" y="4" width="2" height="2"/><rect x="8" y="4" width="2" height="2"/><rect x="12" y="4" width="2" height="2"/></g></svg><div class="a" style="left:35px;top:106px;width:296px;height:107px;background:#a9a9a9"></div><div class="t" style="right:188px;top:121px;color:#111;text-align:right">Camera</div><div class="a" style="left:155px;top:117px;width:167px;height:23px;background:#252525;border-radius:5px"></div><div class="t" style="right:188px;top:152px;color:#111;text-align:right">Background S...</div><div class="a" style="left:155px;top:148px;width:167px;height:23px;background:#252525;border-radius:5px"></div><div class="t" style="right:188px;top:183px;color:#111;text-align:right">Active Clip</div><div class="a" style="left:155px;top:179px;width:167px;height:23px;background:#252525;border-radius:5px"></div><svg style="left:161px;top:120px" width="18" height="18" viewBox="0 0 18 18"><path d="M1 5 V1 H5 M13 1 H17 V5 M17 13 V17 H13 M5 17 H1 V13" fill="none" stroke="#bbb" stroke-width="1.2"/><rect x="4" y="4" width="10" height="10" fill="#e6e6e6"/></svg><svg style="left:300px;top:120px" width="18" height="18" viewBox="0 0 18 18"><path d="M2 16 L10 8 M8 6 L12 10" stroke="#e6e6e6" stroke-width="1.5"/><path d="M11 7 L14 3 A2 2 0 0 1 17 6 L13 9 Z" fill="#e6e6e6"/></svg><svg style="left:161px;top:151px" width="18" height="18" viewBox="0 0 18 18"><path d="M5 2 L1 11 A4 4 0 0 0 8 12 Z" fill="#e6e6e6"/><circle cx="14" cy="4" r="2.5" fill="#e6e6e6"/><circle cx="12" cy="13" r="4.5" fill="#252525" stroke="#e6e6e6" stroke-width="1.3"/></svg><svg style="left:161px;top:182px" width="18" height="18" viewBox="0 0 18 18"><rect x="1" y="8" width="15" height="9" fill="#e6e6e6"/><path d="M1 6 L16 2" stroke="#e6e6e6" stroke-width="2" stroke-dasharray="3 2"/><rect x="1" y="2" width="3" height="6" fill="none" stroke="#e6e6e6"/></svg><svg style="left:47px;top:224px" width="8" height="10" viewBox="0 0 8 10"><path d="M0 0 L7 5 L0 10 Z" fill="#555"/></svg><div class="t" style="left:62px;top:220px;color:#111;font-size:15px">Units</div><svg style="left:308px;top:225px" width="14" height="6" viewBox="0 0 14 6"><g fill="#eaeaea"><rect x="0" y="0" width="2" height="2"/><rect x="4" y="0" width="2" height="2"/><rect x="8" y="0" width="2" height="2"/><rect x="12" y="0" width="2" height="2"/><rect x="0" y="4" width="2" height="2"/><rect x="4" y="4" width="2" height="2"/><rect x="8" y="4" width="2" height="2"/><rect x="12" y="4" width="2" height="2"/></g></svg><svg style="left:47px;top:254px" width="8" height="10" viewBox="0 0 8 10"><path d="M0 0 L7 5 L0 10 Z" fill="#555"/></svg><div class="a" style="left:61px;top:250px;width:17px;height:17px;background:#5680c2;border-radius:3px;border:1px solid #3a5a90"></div><svg style="left:63px;top:252px" width="13" height="13" viewBox="0 0 13 13"><path d="M2.5 6.5 L5.5 9.5 L10.5 3" stroke="#fff" stroke-width="1.8" fill="none"/></svg><div class="t" style="left:81px;top:250px;color:#111;font-size:15px">Gravity</div><svg style="left:308px;top:255px" width="14" height="6" viewBox="0 0 14 6"><g fill="#eaeaea"><rect x="0" y="0" width="2" height="2"/><rect x="4" y="0" width="2" height="2"/><rect x="8" y="0" width="2" height="2"/><rect x="12" y="0" width="2" height="2"/><rect x="0" y="4" width="2" height="2"/><rect x="4" y="4" width="2" height="2"/><rect x="8" y="4" width="2" height="2"/><rect x="12" y="4" width="2" height="2"/></g></svg><svg style="left:47px;top:284px" width="8" height="10" viewBox="0 0 8 10"><path d="M0 0 L7 5 L0 10 Z" fill="#555"/></svg><div class="t" style="left:62px;top:280px;color:#111;font-size:15px">Keying Sets</div><svg style="left:308px;top:285px" width="14" height="6" viewBox="0 0 14 6"><g fill="#eaeaea"><rect x="0" y="0" width="2" height="2"/><rect x="4" y="0" width="2" height="2"/><rect x="8" y="0" width="2" height="2"/><rect x="12" y="0" width="2" height="2"/><rect x="0" y="4" width="2" height="2"/><rect x="4" y="4" width="2" height="2"/><rect x="8" y="4" width="2" height="2"/><rect x="12" y="4" width="2" height="2"/></g></svg><svg style="left:47px;top:314px" width="8" height="10" viewBox="0 0 8 10"><path d="M0 0 L7 5 L0 10 Z" fill="#555"/></svg><div class="t" style="left:62px;top:310px;color:#111;font-size:15px">Audio</div><svg style="left:308px;top:315px" width="14" height="6" viewBox="0 0 14 6"><g fill="#eaeaea"><rect x="0" y="0" width="2" height="2"/><rect x="4" y="0" width="2" height="2"/><rect x="8" y="0" width="2" height="2"/><rect x="12" y="0" width="2" height="2"/><rect x="0" y="4" width="2" height="2"/><rect x="4" y="4" width="2" height="2"/><rect x="8" y="4" width="2" height="2"/><rect x="12" y="4" width="2" height="2"/></g></svg><svg style="left:47px;top:344px" width="8" height="10" viewBox="0 0 8 10"><path d="M0 0 L7 5 L0 10 Z" fill="#555"/></svg><div class="t" style="left:62px;top:340px;color:#111;font-size:15px">Rigid Body World</div><svg style="left:308px;top:345px" width="14" height="6" viewBox="0 0 14 6"><g fill="#eaeaea"><rect x="0" y="0" width="2" height="2"/><rect x="4" y="0" width="2" height="2"/><rect x="8" y="0" width="2" height="2"/><rect x="12" y="0" width="2" height="2"/><rect x="0" y="4" width="2" height="2"/><rect x="4" y="4" width="2" height="2"/><rect x="8" y="4" width="2" height="2"/><rect x="12" y="4" width="2" height="2"/></g></svg></div><div class="a" style="left:0px;top:1056px;width:1920px;height:22px;background:#b3b3b3"></div><div class="a" style="left:0px;top:1056px;width:1px;height:22px;background:#8a8a8a"></div><div class="a" style="left:0px;top:1078px;width:1920px;height:2px;background:#e6e6e6"></div><svg style="left:15px;top:1059px" width="14" height="19" viewBox="0 0 14 19"><path d="M2 7 V12 A5 5 0 0 0 12 12 V6 A5 5 0 0 0 8 1.2 V7 Z" fill="none" stroke="#1a1a1a" stroke-width="1.3"/><path d="M7 1 A5 5 0 0 0 2 6 V7 H7 Z" fill="#1a1a1a"/></svg><div class="t" style="left:43px;top:1059px;color:#111">Select</div><svg style="left:95px;top:1059px" width="14" height="19" viewBox="0 0 14 19"><path d="M2 7 V12 A5 5 0 0 0 12 12 V6 A5 5 0 0 0 8 1.2 V7 Z" fill="none" stroke="#1a1a1a" stroke-width="1.3"/><path d="M7 1 A5 5 0 0 0 2 6 V7 H7 Z" fill="#1a1a1a"/></svg><svg style="left:110px;top:1058px" width="6" height="12" viewBox="0 0 6 12"><path d="M1 1 L2 10 M4 3 V9" stroke="#1a1a1a" stroke-width="1"/></svg><div class="t" style="left:124px;top:1059px;color:#111">Box Select</div><svg style="left:326px;top:1059px" width="14" height="19" viewBox="0 0 14 19"><rect x="1.5" y="1" width="11" height="16" rx="5.5" fill="none" stroke="#1a1a1a" stroke-width="1.3"/><rect x="5.5" y="4" width="3" height="5" rx="1" fill="#1a1a1a"/></svg><div class="t" style="left:353px;top:1059px;color:#111">Rotate View</div><svg style="left:636px;top:1059px" width="14" height="19" viewBox="0 0 14 19"><path d="M12 7 V12 A5 5 0 0 1 2 12 V6 A5 5 0 0 1 6 1.2 V7 Z" fill="none" stroke="#1a1a1a" stroke-width="1.3"/><path d="M7 1 A5 5 0 0 1 12 6 V7 H7 Z" fill="#1a1a1a"/></svg><div class="t" style="left:664px;top:1059px;color:#111">Object Context Menu</div><div class="t" style="left:1859px;top:1059px;color:#1a1a1a">2.91.2</div>
</body></html>
